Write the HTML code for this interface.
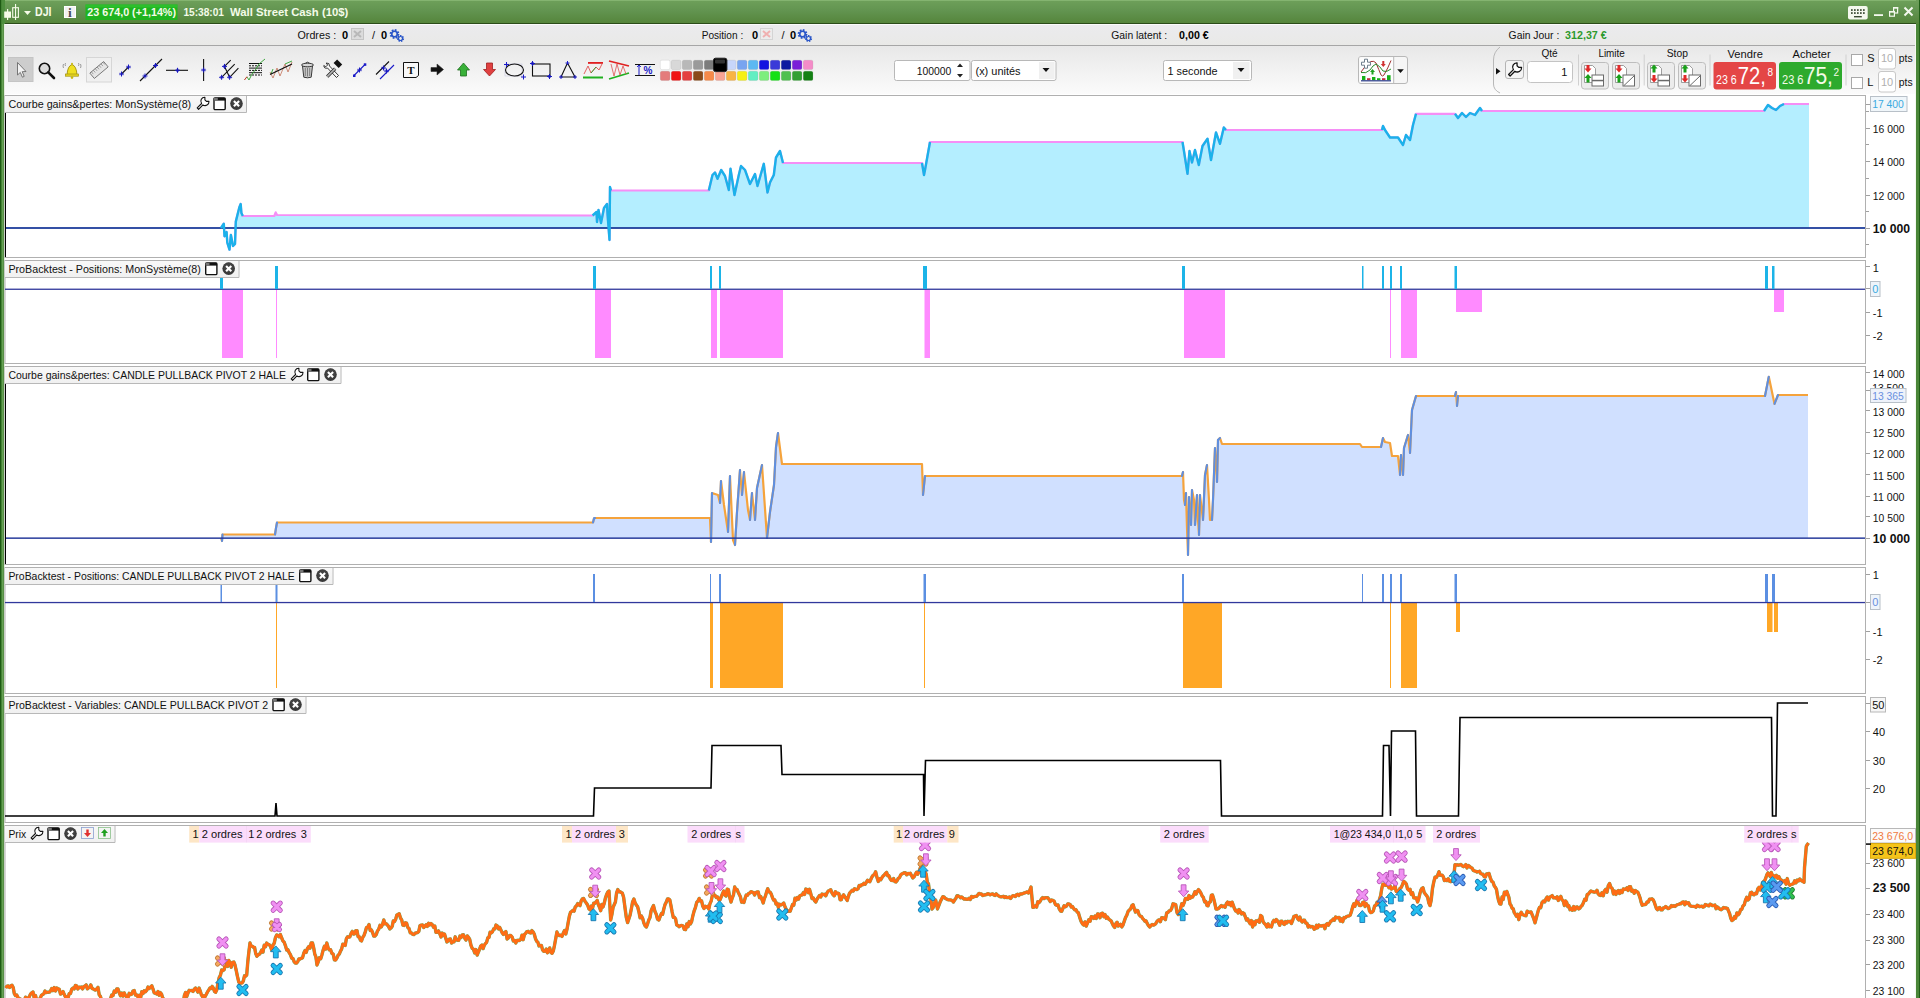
<!DOCTYPE html><html><head><meta charset="utf-8"><style>
html,body{margin:0;padding:0;width:1920px;height:998px;overflow:hidden;background:#fff;}
svg{position:absolute;left:0;top:0;display:block}
text{font-family:"Liberation Sans", sans-serif;}
</style></head><body>
<svg width="1920" height="998" viewBox="0 0 1920 998" shape-rendering="geometricPrecision">
<defs>
<linearGradient id="gTitle" x1="0" y1="0" x2="0" y2="1"><stop offset="0" stop-color="#6ea05a"/><stop offset="0.45" stop-color="#629450"/><stop offset="1" stop-color="#54843a"/></linearGradient>
<linearGradient id="gTool" x1="0" y1="0" x2="0" y2="1"><stop offset="0" stop-color="#e8e8e8"/><stop offset="1" stop-color="#fbfbfb"/></linearGradient>
<linearGradient id="gInfo" x1="0" y1="0" x2="0" y2="1"><stop offset="0" stop-color="#ebebee"/><stop offset="1" stop-color="#e9e9e7"/></linearGradient>
<linearGradient id="gHdr" x1="0" y1="0" x2="0" y2="1"><stop offset="0" stop-color="#f8f8f8"/><stop offset="1" stop-color="#f0f0f0"/></linearGradient>
</defs>

<rect x="0" y="0" width="1920" height="998" fill="#ffffff"/>
<rect x="0" y="0" width="1920" height="24" fill="url(#gTitle)"/>
<rect x="0" y="23" width="1916" height="1" fill="#2b4c1a"/>
<rect x="0" y="0" width="1916" height="1" fill="#84b470"/>
<rect x="0" y="0" width="5" height="998" fill="#4e8e3e"/>
<rect x="0" y="0" width="1.2" height="998" fill="#1e5a14"/>
<rect x="2.4" y="24" width="0.9" height="974" fill="#74ac64"/>
<rect x="3.3" y="24" width="0.8" height="974" fill="#5a8c48"/>
<rect x="4.1" y="24" width="0.9" height="974" fill="#f4f8f0"/>
<rect x="1916" y="24" width="4" height="974" fill="#4a8638"/>
<rect x="1919" y="0" width="1" height="998" fill="#1f5e16"/>
<rect x="1915" y="24" width="1" height="974" fill="#f4f8f0"/>
<rect x="5" y="24" width="1910" height="21" fill="url(#gInfo)"/>
<rect x="5" y="24" width="1910" height="1" fill="#fafafa"/>
<rect x="5" y="45" width="1910" height="1" fill="#a6a6a6"/>
<rect x="5" y="46" width="1910" height="48" fill="url(#gTool)"/>
<rect x="5" y="95" width="1860.5" height="162" fill="#ffffff" stroke="#b0b0b0" stroke-width="1" transform="translate(0,0.5)"/>
<rect x="5" y="260" width="1860.5" height="103" fill="#ffffff" stroke="#b0b0b0" stroke-width="1" transform="translate(0,0.5)"/>
<rect x="5" y="366" width="1860.5" height="198" fill="#ffffff" stroke="#b0b0b0" stroke-width="1" transform="translate(0,0.5)"/>
<rect x="5" y="567" width="1860.5" height="126" fill="#ffffff" stroke="#b0b0b0" stroke-width="1" transform="translate(0,0.5)"/>
<rect x="5" y="696" width="1860.5" height="126" fill="#ffffff" stroke="#b0b0b0" stroke-width="1" transform="translate(0,0.5)"/>
<rect x="5" y="825" width="1860.5" height="175" fill="#ffffff" stroke="#b0b0b0" stroke-width="1" transform="translate(0,0.5)"/>
<polygon points="221.0,228.0 221.0,228.0 223.8,223.7 224.5,228.0 226.6,228.0 227.3,228.0 229.5,228.0 230.9,228.0 233.0,228.0 235.0,228.0 235.8,221.6 239.3,207.5 240.7,204.0 241.4,213.0 242.8,216.0 274.3,216.0 275.7,212.4 277.1,215.0 592.6,215.5 596.5,212.0 597.0,222.0 598.5,210.0 601.0,223.0 604.0,208.0 607.0,204.0 607.5,214.0 609.5,228.0 610.0,187.0 611.0,190.5 708.8,190.5 712.5,175.0 715.0,172.5 717.5,178.8 721.2,170.0 725.0,176.0 728.8,190.0 730.5,168.8 734.5,195.0 738.8,175.0 741.0,166.0 745.0,170.0 750.0,184.0 755.0,174.0 757.5,186.0 763.8,163.8 767.5,192.5 770.0,182.5 773.8,175.0 776.0,157.5 780.0,151.0 783.0,163.0 922.0,163.0 924.0,175.0 925.0,170.0 930.0,142.0 1182.5,142.0 1183.8,150.0 1187.5,173.8 1189.5,151.0 1192.0,162.5 1195.0,150.0 1198.8,165.0 1202.5,146.0 1207.5,138.8 1211.0,160.0 1216.0,132.5 1220.0,143.8 1223.8,127.5 1226.0,130.0 1382.0,130.0 1383.0,126.0 1385.0,130.0 1390.0,137.5 1398.0,137.5 1403.0,145.0 1406.0,135.0 1410.0,140.0 1413.0,125.0 1416.0,113.8 1455.0,113.8 1458.0,118.0 1462.0,113.0 1466.0,117.0 1470.0,113.0 1475.0,115.0 1480.0,108.0 1482.0,111.0 1764.0,111.0 1768.0,105.0 1772.0,108.0 1776.0,110.0 1780.0,106.0 1784.0,104.0 1809.0,104.0 1809.0,228.0" fill="#b4eeff"/>
<polyline points="221.0,228.0 223.8,223.7 224.5,236.3 226.6,232.0 227.3,242.6 229.5,249.6 230.9,234.9 233.0,246.0 235.0,244.0 235.8,221.6 239.3,207.5 240.7,204.0 241.4,213.0 242.8,216.0 274.3,216.0 275.7,212.4 277.1,215.0 592.6,215.5 596.5,212.0 597.0,222.0 598.5,210.0 601.0,223.0 604.0,208.0 607.0,204.0 607.5,214.0 609.5,240.0 610.0,187.0 611.0,190.5 708.8,190.5 712.5,175.0 715.0,172.5 717.5,178.8 721.2,170.0 725.0,176.0 728.8,190.0 730.5,168.8 734.5,195.0 738.8,175.0 741.0,166.0 745.0,170.0 750.0,184.0 755.0,174.0 757.5,186.0 763.8,163.8 767.5,192.5 770.0,182.5 773.8,175.0 776.0,157.5 780.0,151.0 783.0,163.0 922.0,163.0 924.0,175.0 925.0,170.0 930.0,142.0 1182.5,142.0 1183.8,150.0 1187.5,173.8 1189.5,151.0 1192.0,162.5 1195.0,150.0 1198.8,165.0 1202.5,146.0 1207.5,138.8 1211.0,160.0 1216.0,132.5 1220.0,143.8 1223.8,127.5 1226.0,130.0 1382.0,130.0 1383.0,126.0 1385.0,130.0 1390.0,137.5 1398.0,137.5 1403.0,145.0 1406.0,135.0 1410.0,140.0 1413.0,125.0 1416.0,113.8 1455.0,113.8 1458.0,118.0 1462.0,113.0 1466.0,117.0 1470.0,113.0 1475.0,115.0 1480.0,108.0 1482.0,111.0 1764.0,111.0 1768.0,105.0 1772.0,108.0 1776.0,110.0 1780.0,106.0 1784.0,104.0 1809.0,104.0" fill="none" stroke="#f58ef5" stroke-width="2.2" stroke-linejoin="round"/>
<rect x="5" y="227.1" width="1860" height="1.8" fill="#1f3d9c"/>
<polyline points="221.0,228.0 223.8,223.7 224.5,236.3 226.6,232.0 227.3,242.6 229.5,249.6 230.9,234.9 233.0,246.0 235.0,244.0 235.8,221.6 239.3,207.5 240.7,204.0 241.4,213.0 242.8,216.0" fill="none" stroke="#1ab2ea" stroke-width="2.4" stroke-linejoin="round"/>
<polyline points="592.6,215.5 596.5,212.0 597.0,222.0 598.5,210.0 601.0,223.0 604.0,208.0 607.0,204.0 607.5,214.0 609.5,240.0 610.0,187.0 611.0,190.5" fill="none" stroke="#1ab2ea" stroke-width="2.4" stroke-linejoin="round"/>
<polyline points="708.8,190.5 712.5,175.0 715.0,172.5 717.5,178.8 721.2,170.0 725.0,176.0 728.8,190.0 730.5,168.8 734.5,195.0 738.8,175.0 741.0,166.0 745.0,170.0 750.0,184.0 755.0,174.0 757.5,186.0 763.8,163.8 767.5,192.5 770.0,182.5 773.8,175.0 776.0,157.5 780.0,151.0 783.0,163.0" fill="none" stroke="#1ab2ea" stroke-width="2.4" stroke-linejoin="round"/>
<polyline points="922.0,163.0 924.0,175.0 925.0,170.0 930.0,142.0" fill="none" stroke="#1ab2ea" stroke-width="2.4" stroke-linejoin="round"/>
<polyline points="1182.5,142.0 1183.8,150.0 1187.5,173.8 1189.5,151.0 1192.0,162.5 1195.0,150.0 1198.8,165.0 1202.5,146.0 1207.5,138.8 1211.0,160.0 1216.0,132.5 1220.0,143.8 1223.8,127.5 1226.0,130.0" fill="none" stroke="#1ab2ea" stroke-width="2.4" stroke-linejoin="round"/>
<polyline points="1382.0,130.0 1383.0,126.0 1385.0,130.0 1390.0,137.5 1398.0,137.5 1403.0,145.0 1406.0,135.0 1410.0,140.0 1413.0,125.0 1416.0,113.8" fill="none" stroke="#1ab2ea" stroke-width="2.4" stroke-linejoin="round"/>
<polyline points="1455.0,113.8 1458.0,118.0 1462.0,113.0 1466.0,117.0 1470.0,113.0 1475.0,115.0 1480.0,108.0 1482.0,111.0" fill="none" stroke="#1ab2ea" stroke-width="2.4" stroke-linejoin="round"/>
<polyline points="1764.0,111.0 1768.0,105.0 1772.0,108.0 1776.0,110.0 1780.0,106.0 1784.0,104.0" fill="none" stroke="#1ab2ea" stroke-width="2.4" stroke-linejoin="round"/>
<rect x="5" y="113" width="1" height="144" fill="#000"/>
<rect x="222" y="290" width="21" height="68" fill="#ff8bff"/>
<rect x="276" y="290" width="1" height="68" fill="#ff8bff"/>
<rect x="595" y="290" width="16" height="68" fill="#ff8bff"/>
<rect x="711" y="290" width="6" height="68" fill="#ff8bff"/>
<rect x="720" y="290" width="63" height="68" fill="#ff8bff"/>
<rect x="924.5" y="290" width="5.5" height="68" fill="#ff8bff"/>
<rect x="1184" y="290" width="41" height="68" fill="#ff8bff"/>
<rect x="1390" y="290" width="1" height="68" fill="#ff8bff"/>
<rect x="1401" y="290" width="16" height="68" fill="#ff8bff"/>
<rect x="1456" y="290" width="26" height="22" fill="#ff8bff"/>
<rect x="1774" y="290" width="10" height="22" fill="#ff8bff"/>
<rect x="5" y="288.6" width="1860" height="1.3" fill="#30389c"/>
<rect x="220" y="277" width="3" height="12" fill="#1cb4e8"/>
<rect x="275" y="266" width="3" height="23" fill="#1cb4e8"/>
<rect x="593" y="266" width="3" height="23" fill="#1cb4e8"/>
<rect x="710" y="266" width="2" height="23" fill="#1cb4e8"/>
<rect x="719" y="266" width="2" height="23" fill="#1cb4e8"/>
<rect x="923" y="266" width="4" height="23" fill="#1cb4e8"/>
<rect x="1182" y="266" width="3" height="23" fill="#1cb4e8"/>
<rect x="1362" y="266" width="1.5" height="23" fill="#1cb4e8"/>
<rect x="1382" y="266" width="2" height="23" fill="#1cb4e8"/>
<rect x="1390" y="266" width="2" height="23" fill="#1cb4e8"/>
<rect x="1400" y="266" width="2" height="23" fill="#1cb4e8"/>
<rect x="1454.5" y="266" width="2.5" height="23" fill="#1cb4e8"/>
<rect x="1765" y="266" width="3" height="23" fill="#1cb4e8"/>
<rect x="1772" y="266" width="2.5" height="23" fill="#1cb4e8"/>
<polygon points="221.0,538.0 221.0,538.0 222.0,538.0 222.5,534.5 275.0,534.5 276.0,528.0 277.0,522.5 593.0,522.5 594.0,518.5 595.0,518.0 710.0,518.0 711.0,538.0 712.0,493.0 718.0,495.0 720.0,503.0 721.0,481.0 724.0,505.0 728.0,532.0 730.0,476.0 733.0,538.0 735.0,538.0 737.0,512.0 740.0,470.0 742.0,495.0 744.0,472.0 748.0,510.0 750.0,520.0 752.0,493.0 755.0,520.0 757.0,488.0 762.0,465.0 767.0,538.0 770.0,512.0 774.0,485.0 776.0,447.0 778.0,433.0 782.0,464.0 922.0,464.0 923.0,495.0 925.0,476.0 1182.0,476.0 1183.0,472.0 1184.0,500.0 1185.0,505.0 1186.0,493.0 1187.0,528.0 1188.0,538.0 1189.0,497.0 1191.0,525.0 1192.0,490.0 1194.0,500.0 1195.0,525.0 1197.0,495.0 1198.0,520.0 1199.0,535.0 1200.0,495.0 1203.0,520.0 1205.0,475.0 1207.0,465.0 1209.0,500.0 1210.0,520.0 1212.0,520.0 1213.0,500.0 1215.0,448.0 1217.0,482.0 1218.0,440.0 1220.0,438.0 1222.0,444.0 1360.0,444.0 1362.0,447.0 1381.0,447.0 1383.0,438.0 1385.0,442.0 1390.0,443.0 1392.0,456.0 1398.0,456.0 1400.0,475.0 1401.0,455.0 1403.0,475.0 1404.0,448.0 1408.0,435.0 1410.0,453.0 1412.0,410.0 1416.0,396.0 1455.0,396.0 1456.0,392.0 1457.0,406.0 1458.0,396.0 1765.0,396.0 1768.8,376.8 1774.5,403.8 1778.0,395.0 1808.0,395.0 1808.0,538.0" fill="#d0e0ff"/>
<polyline points="221.0,538.0 222.0,541.0 222.5,534.5 275.0,534.5 276.0,528.0 277.0,522.5 593.0,522.5 594.0,518.5 595.0,518.0 710.0,518.0 711.0,542.0 712.0,493.0 718.0,495.0 720.0,503.0 721.0,481.0 724.0,505.0 728.0,532.0 730.0,476.0 733.0,540.0 735.0,545.0 737.0,512.0 740.0,470.0 742.0,495.0 744.0,472.0 748.0,510.0 750.0,520.0 752.0,493.0 755.0,520.0 757.0,488.0 762.0,465.0 767.0,538.0 770.0,512.0 774.0,485.0 776.0,447.0 778.0,433.0 782.0,464.0 922.0,464.0 923.0,495.0 925.0,476.0 1182.0,476.0 1183.0,472.0 1184.0,500.0 1185.0,505.0 1186.0,493.0 1187.0,528.0 1188.0,555.0 1189.0,497.0 1191.0,525.0 1192.0,490.0 1194.0,500.0 1195.0,525.0 1197.0,495.0 1198.0,520.0 1199.0,535.0 1200.0,495.0 1203.0,520.0 1205.0,475.0 1207.0,465.0 1209.0,500.0 1210.0,520.0 1212.0,520.0 1213.0,500.0 1215.0,448.0 1217.0,482.0 1218.0,440.0 1220.0,438.0 1222.0,444.0 1360.0,444.0 1362.0,447.0 1381.0,447.0 1383.0,438.0 1385.0,442.0 1390.0,443.0 1392.0,456.0 1398.0,456.0 1400.0,475.0 1401.0,455.0 1403.0,475.0 1404.0,448.0 1408.0,435.0 1410.0,453.0 1412.0,410.0 1416.0,396.0 1455.0,396.0 1456.0,392.0 1457.0,406.0 1458.0,396.0 1765.0,396.0 1768.8,376.8 1774.5,403.8 1778.0,395.0 1808.0,395.0" fill="none" stroke="#f5a33c" stroke-width="2.2" stroke-linejoin="round"/>
<line x1="222.0" y1="541.0" x2="222.5" y2="534.5" stroke="#5f8fe0" stroke-width="2.1" stroke-linecap="round"/><line x1="275.0" y1="534.5" x2="276.0" y2="528.0" stroke="#5f8fe0" stroke-width="2.1" stroke-linecap="round"/><line x1="276.0" y1="528.0" x2="277.0" y2="522.5" stroke="#5f8fe0" stroke-width="2.1" stroke-linecap="round"/><line x1="593.0" y1="522.5" x2="594.0" y2="518.5" stroke="#5f8fe0" stroke-width="2.1" stroke-linecap="round"/><line x1="594.0" y1="518.5" x2="595.0" y2="518.0" stroke="#5f8fe0" stroke-width="2.1" stroke-linecap="round"/><line x1="711.0" y1="542.0" x2="712.0" y2="493.0" stroke="#5f8fe0" stroke-width="2.1" stroke-linecap="round"/><line x1="720.0" y1="503.0" x2="721.0" y2="481.0" stroke="#5f8fe0" stroke-width="2.1" stroke-linecap="round"/><line x1="728.0" y1="532.0" x2="730.0" y2="476.0" stroke="#5f8fe0" stroke-width="2.1" stroke-linecap="round"/><line x1="735.0" y1="545.0" x2="737.0" y2="512.0" stroke="#5f8fe0" stroke-width="2.1" stroke-linecap="round"/><line x1="737.0" y1="512.0" x2="740.0" y2="470.0" stroke="#5f8fe0" stroke-width="2.1" stroke-linecap="round"/><line x1="742.0" y1="495.0" x2="744.0" y2="472.0" stroke="#5f8fe0" stroke-width="2.1" stroke-linecap="round"/><line x1="750.0" y1="520.0" x2="752.0" y2="493.0" stroke="#5f8fe0" stroke-width="2.1" stroke-linecap="round"/><line x1="755.0" y1="520.0" x2="757.0" y2="488.0" stroke="#5f8fe0" stroke-width="2.1" stroke-linecap="round"/><line x1="757.0" y1="488.0" x2="762.0" y2="465.0" stroke="#5f8fe0" stroke-width="2.1" stroke-linecap="round"/><line x1="767.0" y1="538.0" x2="770.0" y2="512.0" stroke="#5f8fe0" stroke-width="2.1" stroke-linecap="round"/><line x1="770.0" y1="512.0" x2="774.0" y2="485.0" stroke="#5f8fe0" stroke-width="2.1" stroke-linecap="round"/><line x1="774.0" y1="485.0" x2="776.0" y2="447.0" stroke="#5f8fe0" stroke-width="2.1" stroke-linecap="round"/><line x1="776.0" y1="447.0" x2="778.0" y2="433.0" stroke="#5f8fe0" stroke-width="2.1" stroke-linecap="round"/><line x1="923.0" y1="495.0" x2="925.0" y2="476.0" stroke="#5f8fe0" stroke-width="2.1" stroke-linecap="round"/><line x1="1182.0" y1="476.0" x2="1183.0" y2="472.0" stroke="#5f8fe0" stroke-width="2.1" stroke-linecap="round"/><line x1="1185.0" y1="505.0" x2="1186.0" y2="493.0" stroke="#5f8fe0" stroke-width="2.1" stroke-linecap="round"/><line x1="1188.0" y1="555.0" x2="1189.0" y2="497.0" stroke="#5f8fe0" stroke-width="2.1" stroke-linecap="round"/><line x1="1191.0" y1="525.0" x2="1192.0" y2="490.0" stroke="#5f8fe0" stroke-width="2.1" stroke-linecap="round"/><line x1="1195.0" y1="525.0" x2="1197.0" y2="495.0" stroke="#5f8fe0" stroke-width="2.1" stroke-linecap="round"/><line x1="1199.0" y1="535.0" x2="1200.0" y2="495.0" stroke="#5f8fe0" stroke-width="2.1" stroke-linecap="round"/><line x1="1203.0" y1="520.0" x2="1205.0" y2="475.0" stroke="#5f8fe0" stroke-width="2.1" stroke-linecap="round"/><line x1="1205.0" y1="475.0" x2="1207.0" y2="465.0" stroke="#5f8fe0" stroke-width="2.1" stroke-linecap="round"/><line x1="1212.0" y1="520.0" x2="1213.0" y2="500.0" stroke="#5f8fe0" stroke-width="2.1" stroke-linecap="round"/><line x1="1213.0" y1="500.0" x2="1215.0" y2="448.0" stroke="#5f8fe0" stroke-width="2.1" stroke-linecap="round"/><line x1="1217.0" y1="482.0" x2="1218.0" y2="440.0" stroke="#5f8fe0" stroke-width="2.1" stroke-linecap="round"/><line x1="1218.0" y1="440.0" x2="1220.0" y2="438.0" stroke="#5f8fe0" stroke-width="2.1" stroke-linecap="round"/><line x1="1381.0" y1="447.0" x2="1383.0" y2="438.0" stroke="#5f8fe0" stroke-width="2.1" stroke-linecap="round"/><line x1="1400.0" y1="475.0" x2="1401.0" y2="455.0" stroke="#5f8fe0" stroke-width="2.1" stroke-linecap="round"/><line x1="1403.0" y1="475.0" x2="1404.0" y2="448.0" stroke="#5f8fe0" stroke-width="2.1" stroke-linecap="round"/><line x1="1404.0" y1="448.0" x2="1408.0" y2="435.0" stroke="#5f8fe0" stroke-width="2.1" stroke-linecap="round"/><line x1="1410.0" y1="453.0" x2="1412.0" y2="410.0" stroke="#5f8fe0" stroke-width="2.1" stroke-linecap="round"/><line x1="1412.0" y1="410.0" x2="1416.0" y2="396.0" stroke="#5f8fe0" stroke-width="2.1" stroke-linecap="round"/><line x1="1455.0" y1="396.0" x2="1456.0" y2="392.0" stroke="#5f8fe0" stroke-width="2.1" stroke-linecap="round"/><line x1="1457.0" y1="406.0" x2="1458.0" y2="396.0" stroke="#5f8fe0" stroke-width="2.1" stroke-linecap="round"/><line x1="1765.0" y1="396.0" x2="1768.8" y2="376.8" stroke="#5f8fe0" stroke-width="2.1" stroke-linecap="round"/><line x1="1774.5" y1="403.8" x2="1778.0" y2="395.0" stroke="#5f8fe0" stroke-width="2.1" stroke-linecap="round"/>
<rect x="5" y="537.4" width="1860" height="1.5" fill="#283c9c"/>
<rect x="5" y="384" width="1" height="180" fill="#000"/>
<rect x="276" y="603" width="1" height="85" fill="#ffa726"/>
<rect x="710" y="603" width="3" height="85" fill="#ffa726"/>
<rect x="720" y="603" width="63" height="85" fill="#ffa726"/>
<rect x="924" y="603" width="1" height="85" fill="#ffa726"/>
<rect x="1183" y="603" width="39" height="85" fill="#ffa726"/>
<rect x="1390" y="603" width="1" height="85" fill="#ffa726"/>
<rect x="1401" y="603" width="16" height="85" fill="#ffa726"/>
<rect x="1456" y="603" width="4" height="29" fill="#ffa726"/>
<rect x="1767" y="603" width="5.5" height="29" fill="#ffa726"/>
<rect x="1774" y="603" width="4" height="29" fill="#ffa726"/>
<rect x="5" y="601.9" width="1860" height="1.3" fill="#30389c"/>
<rect x="220.5" y="574" width="1.5" height="28" fill="#5b8fe2"/>
<rect x="275.5" y="574" width="2.0" height="28" fill="#5b8fe2"/>
<rect x="593" y="574" width="2" height="28" fill="#5b8fe2"/>
<rect x="710" y="574" width="1" height="28" fill="#5b8fe2"/>
<rect x="719" y="574" width="2" height="28" fill="#5b8fe2"/>
<rect x="923.5" y="574" width="2.5" height="28" fill="#5b8fe2"/>
<rect x="1182" y="574" width="2" height="28" fill="#5b8fe2"/>
<rect x="1362" y="574" width="1" height="28" fill="#5b8fe2"/>
<rect x="1382" y="574" width="2" height="28" fill="#5b8fe2"/>
<rect x="1390" y="574" width="2" height="28" fill="#5b8fe2"/>
<rect x="1400" y="574" width="2" height="28" fill="#5b8fe2"/>
<rect x="1454.5" y="574" width="2.5" height="28" fill="#5b8fe2"/>
<rect x="1765" y="574" width="3" height="28" fill="#5b8fe2"/>
<rect x="1772" y="574" width="3" height="28" fill="#5b8fe2"/>
<polyline points="5.0,816.0 275.0,816.0 276.0,803.0 277.0,816.0 593.5,816.0 594.5,788.0 711.0,788.0 712.0,745.5 781.0,745.5 782.0,774.5 923.5,774.5 924.0,816.0 925.5,760.5 1220.5,760.5 1221.5,816.0 1382.5,816.0 1383.5,745.5 1389.0,745.5 1390.5,816.0 1391.5,731.0 1415.5,731.0 1416.5,816.0 1458.5,816.0 1460.0,717.5 1771.5,717.5 1772.5,816.0 1776.0,816.0 1777.5,703.0 1808.0,703.0" fill="none" stroke="#000" stroke-width="1.6" stroke-linejoin="miter"/>
<polyline points="5.8,988.0 7.0,986.1 8.3,985.9 9.6,987.5 10.8,986.0 12.0,985.2 13.2,987.6 14.3,993.6 15.5,995.6 16.7,995.0 18.0,997.6 19.2,998.5 20.5,999.0 21.7,1001.6 23.0,1001.0 24.2,1001.3 25.5,997.2 26.8,999.2 28.0,998.1 29.2,996.9 30.5,994.1 31.8,992.8 33.0,992.0 34.2,997.9 35.5,995.5 36.8,1001.0 38.0,1001.0 39.2,1000.0 40.3,997.9 41.5,995.2 42.7,994.6 43.8,993.7 45.0,991.0 46.1,992.5 47.2,992.3 48.4,992.2 49.5,992.1 50.6,990.8 51.7,988.5 53.0,990.6 54.2,987.5 55.5,991.0 56.7,988.0 58.0,988.8 59.2,989.1 60.5,994.1 61.7,993.1 63.0,991.5 64.2,994.3 65.5,997.1 66.8,997.0 68.0,998.0 69.2,993.6 70.5,993.5 71.8,989.0 73.0,988.0 74.2,988.9 75.4,985.4 76.6,985.8 77.8,989.0 79.0,987.2 80.2,987.6 81.4,987.1 82.6,988.9 83.8,986.5 85.0,986.0 86.2,984.9 87.3,988.8 88.5,987.9 89.7,987.0 90.8,984.9 92.0,988.4 93.2,988.9 94.4,989.6 95.5,990.1 96.7,989.0 98.0,987.4 99.2,994.8 100.5,996.6 101.7,1001.0 103.0,1001.5 104.2,1000.4 105.5,1000.1 106.7,999.7 108.0,1001.0 109.2,1001.9 110.5,998.6 111.7,995.1 113.0,995.6 114.2,991.1 115.5,992.3 116.7,989.0 118.0,989.0 119.2,992.6 120.5,995.8 121.7,993.1 123.0,996.1 124.2,992.9 125.5,995.6 126.7,997.0 128.0,997.5 129.2,993.3 130.5,994.7 131.7,994.2 133.0,991.0 134.2,990.5 135.5,995.1 136.8,994.9 138.0,997.0 139.2,995.3 140.5,998.5 141.8,991.6 143.0,993.6 144.2,990.8 145.5,991.8 146.8,990.2 148.0,987.0 149.2,988.4 150.5,987.2 151.8,985.8 153.0,989.0 154.2,992.8 155.5,993.3 156.8,994.0 158.0,991.5 159.2,995.2 160.3,992.6 161.5,994.0 162.7,998.1 163.8,999.0 165.0,1001.0 166.2,1001.9 167.3,1000.5 168.5,1001.6 169.7,1001.4 170.8,1002.6 172.0,1003.0 173.2,1001.2 174.5,1004.8 175.8,1006.6 177.0,1004.6 178.2,1001.0 179.5,1001.2 180.8,1002.1 182.0,1003.0 183.2,1003.7 184.4,995.3 185.6,992.4 186.8,996.4 188.0,993.0 189.2,990.3 190.5,990.6 191.7,990.5 193.0,991.5 194.2,989.2 195.5,988.0 196.7,990.0 197.9,992.1 199.1,988.1 200.3,991.2 201.4,994.9 202.6,996.7 203.8,995.8 205.0,996.7 206.2,994.5 207.5,991.9 208.8,989.9 210.0,988.0 211.1,988.5 212.2,986.4 213.3,988.0 214.5,991.4 215.6,992.3 216.7,990.0 217.9,983.7 219.2,977.6 220.4,975.3 221.7,970.0 222.9,970.6 224.1,969.7 225.3,965.3 226.4,960.8 227.6,966.4 228.8,960.4 230.0,963.0 231.2,967.2 232.5,962.4 233.8,962.0 235.0,965.0 236.2,970.4 237.5,976.7 238.8,982.1 240.0,983.0 241.1,983.1 242.2,982.8 243.3,981.0 244.5,975.8 245.6,976.2 246.7,975.0 247.8,961.8 248.9,951.7 250.0,943.0 251.1,946.1 252.3,946.1 253.4,947.2 254.6,947.4 255.7,953.5 256.9,956.2 258.0,955.0 259.2,954.3 260.5,952.8 261.7,950.1 263.0,952.1 264.2,945.2 265.5,946.7 266.7,943.0 267.9,944.4 269.2,944.7 270.4,946.2 271.7,950.0 272.9,945.3 274.2,943.3 275.4,937.8 276.7,935.0 277.9,935.3 279.2,936.8 280.4,934.6 281.7,938.0 282.9,940.9 284.2,942.2 285.4,945.6 286.7,950.0 287.9,949.7 289.2,952.7 290.4,954.6 291.7,958.2 292.9,958.4 294.2,961.8 295.4,963.1 296.7,963.0 297.8,961.5 298.9,958.9 300.0,959.0 301.2,958.3 302.5,957.9 303.8,953.1 305.0,950.6 306.2,952.4 307.5,948.4 308.8,946.6 310.0,948.1 311.2,942.9 312.5,943.0 313.6,947.4 314.8,954.2 315.9,956.9 317.0,965.0 318.2,961.9 319.4,957.8 320.7,958.8 321.9,954.9 323.1,950.3 324.4,946.2 325.6,949.1 326.8,943.0 328.1,947.8 329.3,949.9 330.6,949.7 331.9,953.4 333.2,954.0 334.4,959.8 335.7,960.0 336.9,958.0 338.1,955.3 339.3,954.1 340.5,951.1 341.6,949.1 342.8,944.2 344.0,944.5 345.2,945.5 346.4,938.6 347.6,936.8 348.8,937.1 349.9,936.8 351.1,933.4 352.3,931.4 353.5,934.0 354.6,933.8 355.8,930.6 357.0,930.6 358.1,936.8 359.2,936.7 360.4,940.1 361.5,941.0 362.8,937.3 364.0,935.4 365.3,931.8 366.5,927.5 367.8,927.0 369.0,924.6 370.2,930.5 371.4,929.9 372.5,932.2 373.7,936.0 374.9,936.0 376.2,934.6 377.4,931.1 378.7,929.2 380.0,925.3 381.3,926.9 382.5,924.5 383.8,920.0 385.0,923.8 386.2,923.6 387.4,924.9 388.6,926.6 389.8,928.9 391.0,928.0 392.2,926.3 393.3,920.9 394.5,921.5 395.7,919.2 396.8,915.1 398.0,914.5 399.2,913.7 400.5,918.0 401.7,919.9 402.9,925.1 404.1,925.5 405.4,922.8 406.6,923.2 407.8,927.4 409.0,928.5 410.3,932.9 411.5,933.0 412.7,934.3 413.9,934.6 415.2,933.2 416.4,932.8 417.6,932.5 418.8,931.4 420.0,925.5 421.2,925.1 422.5,925.0 423.7,927.5 424.9,926.2 426.1,924.7 427.3,926.4 428.6,923.2 429.8,924.9 431.0,923.5 432.2,924.5 433.5,927.2 434.8,926.0 436.0,932.4 437.2,932.2 438.5,930.9 439.8,933.7 441.0,937.0 442.2,933.1 443.4,935.4 444.5,934.0 445.7,938.1 446.9,941.9 448.1,940.9 449.2,939.1 450.4,939.0 451.6,943.0 452.8,941.9 454.0,941.8 455.2,936.8 456.4,939.8 457.5,940.2 458.7,940.4 459.9,936.1 461.1,937.4 462.3,935.0 463.5,934.8 464.8,938.2 466.0,940.0 467.3,935.9 468.5,937.3 469.7,939.4 471.0,945.4 472.2,948.3 473.4,949.1 474.7,952.9 475.9,949.5 477.2,955.1 478.4,952.0 479.6,949.1 480.7,946.0 481.9,945.1 483.1,948.6 484.3,945.2 485.4,943.6 486.6,942.3 487.8,937.9 489.0,937.4 490.1,932.2 491.3,932.9 492.5,931.7 493.7,928.8 494.8,928.9 496.0,925.0 497.2,925.9 498.5,928.9 499.7,927.4 500.9,930.0 502.2,932.8 503.4,934.4 504.7,932.6 505.9,931.6 507.1,939.0 508.4,937.9 509.6,935.5 510.8,935.5 512.1,937.0 513.3,940.9 514.6,940.5 515.8,943.0 517.0,940.5 518.3,940.3 519.5,940.5 520.8,939.5 522.0,935.2 523.2,939.7 524.5,934.4 525.7,933.3 526.9,931.6 528.2,931.3 529.4,932.6 530.7,933.0 531.9,930.6 533.1,931.9 534.3,934.2 535.5,938.7 536.7,941.3 537.8,942.1 539.0,945.9 540.2,945.5 541.4,945.5 542.6,950.0 543.8,951.4 545.0,951.3 546.2,949.1 547.4,952.8 548.5,950.5 549.7,947.9 550.9,952.4 552.1,953.3 553.3,951.0 554.5,945.3 555.7,938.7 556.9,932.0 558.2,934.7 559.4,935.6 560.7,935.1 562.0,936.4 563.3,933.1 564.5,930.6 565.8,934.0 567.0,929.2 568.2,922.4 569.4,916.0 570.6,912.1 571.8,911.3 573.0,910.3 574.1,911.2 575.3,906.8 576.5,905.9 577.7,903.6 578.9,904.9 580.0,905.6 581.2,900.9 582.4,898.8 583.6,898.5 585.0,901.3 586.3,903.0 587.6,905.0 589.0,909.0 590.2,909.9 591.3,906.1 592.5,908.3 593.7,903.1 594.8,903.2 596.0,902.0 597.2,900.4 598.3,904.5 599.5,907.3 600.7,910.7 601.8,904.4 603.0,907.0 604.2,903.4 605.4,898.1 606.6,894.6 607.8,892.1 609.0,891.0 610.7,920.0 611.9,914.5 613.1,907.3 614.2,904.8 615.4,902.0 616.6,892.8 617.8,889.6 618.9,891.8 620.0,891.7 621.2,892.5 622.3,893.0 623.6,897.2 625.0,907.8 626.3,917.4 627.6,922.6 628.9,918.8 630.1,915.1 631.4,908.5 632.6,901.9 633.9,899.0 635.1,902.8 636.4,905.1 637.6,906.7 638.9,911.7 640.1,917.8 641.4,916.0 642.6,918.2 643.9,923.1 645.1,925.7 646.4,927.0 647.6,923.8 648.8,919.9 650.0,917.4 651.1,910.9 652.3,908.0 653.5,905.6 654.9,911.3 656.2,914.1 657.5,919.0 658.9,920.0 660.1,916.7 661.4,913.6 662.6,914.3 663.8,909.0 665.0,904.6 666.2,902.3 667.5,898.9 668.7,899.0 669.8,899.8 671.0,905.8 672.1,911.8 673.3,917.4 674.4,917.3 675.6,918.9 676.7,925.0 678.0,925.6 679.2,926.8 680.5,925.7 681.8,925.4 683.1,926.1 684.3,929.4 685.6,929.7 686.8,923.9 688.0,926.8 689.2,921.6 690.4,923.9 691.6,921.6 692.8,916.0 694.1,911.1 695.4,907.6 696.7,902.4 698.0,901.0 699.2,898.4 700.4,901.1 701.6,901.0 702.8,906.3 704.0,908.5 705.2,906.3 706.4,907.1 707.6,906.3 708.8,909.0 710.0,903.5 711.2,901.0 712.4,895.0 713.7,895.0 714.9,895.1 716.2,897.4 717.5,896.9 718.8,899.8 720.0,899.9 721.3,896.7 722.5,893.7 723.7,891.0 724.8,894.9 726.0,896.0 727.2,889.2 728.4,889.6 729.7,897.4 731.0,902.0 732.2,898.0 733.5,894.8 734.7,887.0 735.8,889.4 737.0,889.4 738.1,892.0 739.3,894.5 740.4,896.7 741.6,902.2 742.7,902.0 743.9,902.5 745.1,898.3 746.2,895.1 747.4,895.4 748.6,893.5 749.8,893.0 751.0,891.7 752.2,892.1 753.4,892.5 754.6,895.0 755.8,892.5 757.0,892.0 758.2,891.9 759.5,897.7 760.7,896.5 762.0,899.7 763.2,903.0 764.3,898.7 765.5,895.9 766.6,891.9 767.7,888.7 768.9,891.9 770.1,892.1 771.3,894.2 772.5,897.6 773.6,900.1 774.8,899.9 776.0,904.0 777.2,903.3 778.4,907.4 779.7,904.2 781.0,904.9 782.4,904.2 783.7,903.0 785.0,906.8 786.4,909.7 787.7,911.4 789.0,911.0 790.2,911.2 791.4,907.7 792.6,904.4 793.8,905.1 795.0,898.2 796.2,900.0 797.4,897.4 798.6,899.1 799.8,895.7 801.0,895.2 802.2,894.9 803.4,892.6 804.6,894.4 805.8,889.1 807.0,889.6 808.3,892.7 809.5,889.3 810.8,893.8 812.0,898.5 813.3,898.0 814.5,900.6 815.8,902.0 817.0,899.3 818.3,897.2 819.5,895.5 820.8,896.9 822.0,894.1 823.3,894.6 824.5,894.3 825.8,895.8 827.0,892.9 828.3,891.0 829.5,890.4 830.7,889.7 831.8,892.6 833.0,894.5 834.2,895.8 835.4,891.7 836.6,893.6 837.7,893.1 838.9,893.5 840.1,899.8 841.3,899.7 842.5,896.2 843.6,894.8 844.8,896.7 846.0,898.5 847.2,900.5 848.4,896.3 849.6,893.1 850.9,891.8 852.1,890.3 853.3,891.0 854.5,888.7 855.7,889.3 856.8,889.6 858.0,888.9 859.2,885.4 860.4,886.0 861.6,884.7 862.8,884.8 863.9,883.2 865.1,884.3 866.3,882.4 867.5,880.2 868.6,881.3 869.8,881.7 871.0,879.0 872.1,876.6 873.3,875.1 874.5,874.3 875.6,871.7 877.0,877.5 878.3,881.5 879.5,878.7 880.7,879.8 881.8,877.9 883.0,876.1 884.2,875.1 885.4,873.5 886.6,872.4 887.8,875.9 888.9,875.7 890.1,878.6 891.3,880.4 892.5,880.6 893.6,878.6 894.8,881.6 896.0,882.0 897.2,880.5 898.3,878.2 899.5,877.7 900.7,874.9 901.8,873.9 903.0,873.5 904.2,872.7 905.4,872.8 906.7,874.8 907.9,873.4 909.1,873.9 910.3,873.2 911.6,875.7 912.8,877.9 914.0,877.0 915.2,874.5 916.5,872.3 917.7,874.2 918.9,872.0 920.2,868.1 921.4,866.0 922.6,870.4 923.8,870.8 925.0,871.7 926.2,874.2 927.3,882.1 928.5,884.0 929.7,893.6 930.8,898.8 932.0,909.0 933.2,907.4 934.5,903.1 935.7,900.0 937.5,909.0 938.8,905.6 940.1,902.1 941.5,899.2 942.8,896.7 944.0,897.0 945.2,898.3 946.4,898.9 947.6,899.7 948.7,899.9 949.9,899.9 951.1,900.1 952.3,900.7 953.5,902.0 954.7,899.9 955.8,898.5 957.0,895.8 958.2,895.8 959.4,896.6 960.6,897.8 961.8,897.0 963.0,898.1 964.2,899.1 965.4,898.9 966.6,899.4 967.8,899.4 969.0,898.2 970.3,899.5 971.5,896.4 972.8,897.4 974.0,896.7 975.3,896.4 976.5,896.4 977.8,894.9 979.0,893.4 980.3,894.0 981.5,894.0 982.8,895.6 984.0,895.0 985.3,894.8 986.5,894.5 987.8,893.6 989.0,894.0 990.2,894.8 991.4,894.1 992.6,893.9 993.8,894.9 995.0,895.4 996.2,893.9 997.4,895.0 998.6,895.9 999.8,896.6 1001.0,896.8 1002.2,896.8 1003.4,896.3 1004.6,897.5 1005.8,896.7 1007.0,897.6 1008.2,897.5 1009.4,896.9 1010.6,898.5 1011.8,896.7 1012.9,895.6 1014.1,895.9 1015.3,896.6 1016.5,894.8 1017.7,894.2 1018.9,895.5 1020.1,894.0 1021.3,894.0 1022.5,893.8 1023.6,893.2 1024.8,892.8 1026.0,892.4 1027.2,891.9 1028.4,893.0 1029.7,890.5 1031.0,887.0 1032.0,898.2 1032.9,907.4 1034.1,907.1 1035.4,905.8 1036.6,907.1 1037.8,901.7 1039.0,902.7 1040.2,901.2 1041.5,898.7 1042.7,897.6 1044.0,898.6 1045.2,897.7 1046.5,897.6 1047.8,897.8 1049.1,899.6 1050.3,901.5 1051.6,900.0 1052.9,900.4 1054.1,901.2 1055.4,904.5 1056.7,905.3 1058.0,904.9 1059.2,908.7 1060.5,911.0 1061.7,911.3 1062.9,908.4 1064.1,905.7 1065.3,906.8 1066.5,906.1 1067.7,904.0 1068.9,903.9 1070.1,904.5 1071.3,907.1 1072.5,906.5 1073.6,908.4 1074.8,909.8 1076.0,909.7 1077.2,912.1 1078.4,912.8 1079.7,917.4 1081.1,921.4 1082.4,923.7 1083.7,925.0 1085.0,921.9 1086.2,926.1 1087.5,922.9 1088.8,919.7 1090.1,921.3 1091.3,916.7 1092.6,917.0 1093.8,918.5 1095.1,915.9 1096.3,918.4 1097.6,913.9 1098.8,914.2 1100.0,917.7 1101.3,913.6 1102.5,913.2 1103.8,916.7 1105.0,914.5 1106.2,918.2 1107.4,917.0 1108.7,919.1 1109.9,920.0 1111.1,920.8 1112.3,923.5 1113.5,926.0 1114.7,927.5 1115.9,923.6 1117.1,922.2 1118.2,926.0 1119.4,925.5 1120.6,924.2 1121.8,926.9 1123.0,925.0 1124.3,921.1 1125.5,917.6 1126.8,915.2 1128.1,911.4 1129.4,910.0 1130.6,908.9 1131.9,905.6 1133.1,904.7 1134.3,908.7 1135.5,912.1 1136.6,910.3 1137.8,910.6 1139.0,914.5 1140.2,916.1 1141.4,916.4 1142.6,918.4 1143.8,919.6 1144.9,921.2 1146.1,921.0 1147.3,923.6 1148.5,925.6 1149.7,927.0 1150.9,925.7 1152.1,924.4 1153.3,925.1 1154.5,924.6 1155.6,923.9 1156.8,921.7 1158.0,920.4 1159.2,919.9 1160.4,921.7 1161.7,917.6 1162.9,917.8 1164.2,918.1 1165.4,919.6 1166.7,912.9 1168.0,912.4 1169.2,910.8 1170.5,910.5 1171.7,908.4 1173.0,903.8 1174.3,904.2 1175.7,904.6 1177.0,912.5 1178.3,914.5 1179.5,913.4 1180.7,908.0 1181.8,903.7 1183.0,905.5 1184.2,902.7 1185.4,898.5 1186.6,898.5 1187.8,899.3 1189.0,895.5 1190.2,898.3 1191.4,896.8 1192.6,897.0 1193.7,894.8 1194.9,891.7 1196.1,894.0 1197.3,891.4 1198.5,889.6 1199.7,891.0 1200.9,893.1 1202.1,895.9 1203.3,897.3 1204.6,901.9 1205.8,901.5 1207.0,905.6 1208.1,905.8 1209.2,902.4 1210.3,902.0 1211.4,895.1 1212.5,895.0 1213.7,898.9 1214.8,903.4 1216.0,909.0 1217.1,909.1 1218.2,908.7 1219.2,907.9 1220.3,906.6 1221.4,905.6 1222.6,906.7 1223.9,906.1 1225.1,907.3 1226.4,903.6 1227.6,902.0 1228.8,904.4 1229.9,902.5 1231.1,905.7 1232.2,902.2 1233.4,905.6 1234.5,908.8 1235.7,911.0 1236.9,910.2 1238.1,913.0 1239.2,909.6 1240.4,911.5 1241.6,913.9 1242.8,912.8 1244.0,913.5 1245.2,916.5 1246.5,920.1 1247.7,918.9 1248.9,921.7 1250.1,923.7 1251.4,920.5 1252.6,927.0 1253.7,922.0 1254.9,924.8 1256.0,920.9 1257.2,921.4 1258.3,920.3 1259.5,922.3 1260.6,915.4 1261.9,916.6 1263.1,921.7 1264.4,923.5 1265.6,924.6 1266.9,927.0 1268.1,923.9 1269.2,926.7 1270.4,926.1 1271.5,926.9 1272.7,922.1 1273.8,920.4 1275.0,921.7 1276.2,919.5 1277.3,920.6 1278.5,922.8 1279.7,925.3 1280.8,921.3 1282.0,921.2 1283.2,923.6 1284.3,924.5 1285.5,921.6 1286.7,923.0 1287.8,921.3 1289.0,921.7 1290.2,921.3 1291.4,923.5 1292.7,920.3 1293.9,916.3 1295.1,916.0 1296.3,915.4 1297.5,918.4 1298.7,919.9 1299.9,917.1 1301.1,920.8 1302.3,922.0 1303.4,920.1 1304.6,920.3 1305.8,923.1 1307.0,923.3 1308.2,927.1 1309.4,925.9 1310.6,927.0 1311.8,926.5 1313.0,926.8 1314.2,929.3 1315.4,928.6 1316.5,925.3 1317.7,927.8 1318.9,925.0 1320.1,925.9 1321.3,926.0 1322.5,925.7 1323.7,925.4 1324.9,928.7 1326.1,924.6 1327.3,923.5 1328.4,925.2 1329.6,923.3 1330.8,921.1 1332.0,920.7 1333.2,919.0 1334.4,920.2 1335.6,917.0 1336.8,917.6 1338.0,917.9 1339.2,917.4 1340.3,921.1 1341.5,918.9 1342.7,921.7 1344.0,917.5 1345.2,917.9 1346.5,916.5 1347.8,916.1 1349.1,915.9 1350.3,915.1 1351.6,911.0 1352.7,906.6 1353.8,903.8 1354.8,906.5 1355.9,903.2 1357.0,900.3 1358.2,902.6 1359.3,905.3 1360.5,905.6 1361.7,904.8 1362.8,902.3 1364.0,902.0 1365.1,906.5 1366.2,903.6 1367.3,905.4 1368.4,905.8 1369.5,911.0 1370.8,912.6 1372.0,912.2 1373.3,910.9 1374.6,906.0 1375.9,905.2 1377.1,902.2 1378.4,903.8 1379.5,899.2 1380.6,895.9 1381.7,889.0 1382.8,884.2 1384.0,884.1 1385.3,885.4 1386.5,884.9 1387.8,885.5 1389.0,887.8 1390.2,886.0 1391.4,889.1 1392.6,888.2 1393.8,888.1 1395.0,885.7 1396.2,891.4 1397.5,891.6 1398.7,891.1 1400.0,888.4 1401.2,887.5 1402.5,884.6 1403.7,881.4 1405.0,882.4 1406.3,884.0 1407.5,888.8 1408.8,890.2 1410.0,889.2 1411.3,894.4 1412.6,892.7 1413.8,897.9 1415.1,898.0 1416.3,897.9 1417.6,902.0 1418.7,898.7 1419.8,894.0 1420.8,890.4 1421.9,888.4 1423.0,887.8 1424.2,892.5 1425.3,894.0 1426.5,895.6 1427.7,897.3 1428.8,902.9 1430.0,905.6 1431.2,900.2 1432.5,888.4 1433.7,882.4 1435.0,877.2 1436.3,877.5 1437.7,875.2 1439.0,871.7 1440.1,875.2 1441.2,875.1 1442.2,875.1 1443.3,876.7 1444.4,880.6 1445.7,879.6 1446.9,880.6 1448.2,878.7 1449.5,881.2 1450.8,881.7 1452.0,880.3 1453.3,880.6 1455.0,864.6 1456.2,865.0 1457.4,864.8 1458.6,865.2 1459.8,864.8 1461.0,864.5 1462.2,865.9 1463.4,866.7 1464.6,865.8 1465.8,864.6 1467.0,867.9 1468.3,865.6 1469.5,866.2 1470.8,867.6 1472.0,868.0 1473.3,870.4 1474.5,870.9 1475.8,871.3 1477.0,872.0 1478.3,871.7 1479.5,871.2 1480.7,873.5 1481.8,874.1 1483.0,874.3 1484.2,876.6 1485.4,877.0 1486.6,873.9 1487.8,873.8 1489.0,873.5 1490.3,877.8 1491.7,881.3 1493.0,882.1 1494.3,886.0 1495.4,887.3 1496.5,889.5 1497.5,895.7 1498.6,900.6 1499.7,903.8 1500.9,904.1 1502.1,896.9 1503.2,899.4 1504.4,892.1 1505.6,894.6 1506.8,891.4 1507.8,894.2 1508.9,897.4 1510.0,904.0 1511.0,905.3 1512.1,908.2 1513.2,908.8 1514.2,912.5 1515.3,914.2 1516.4,916.3 1517.6,914.3 1518.8,919.7 1520.0,914.7 1521.2,912.3 1522.4,914.4 1523.6,915.0 1524.8,915.5 1526.0,915.7 1527.2,911.2 1528.4,912.0 1529.7,912.3 1531.0,911.9 1532.4,915.3 1533.7,918.5 1535.0,922.8 1536.1,918.7 1537.2,914.6 1538.3,910.3 1539.4,907.5 1540.7,907.7 1542.0,902.7 1543.4,901.0 1544.7,902.0 1546.0,898.8 1547.2,897.0 1548.5,900.1 1549.7,897.2 1551.0,896.4 1552.2,895.6 1553.5,897.9 1554.7,897.7 1555.9,898.1 1557.1,896.8 1558.3,900.5 1559.5,898.3 1560.8,896.4 1562.0,899.8 1563.2,900.9 1564.4,905.5 1565.6,901.0 1566.7,902.3 1567.8,906.7 1568.9,905.6 1570.0,909.7 1571.2,908.4 1572.4,910.3 1573.7,906.5 1574.9,909.9 1576.1,907.2 1577.3,907.0 1578.6,908.9 1579.8,908.3 1581.0,906.4 1582.2,905.4 1583.5,902.5 1584.7,899.3 1586.0,900.3 1587.2,894.6 1588.5,893.9 1589.7,892.2 1590.9,891.0 1592.1,891.6 1593.3,891.8 1594.5,892.2 1595.8,891.9 1597.0,890.3 1598.2,893.9 1599.4,895.1 1600.6,895.5 1601.9,892.8 1603.2,895.8 1604.4,891.0 1605.7,889.4 1607.0,892.2 1608.3,885.6 1609.6,883.5 1610.9,887.3 1612.2,888.5 1613.4,894.0 1614.7,891.0 1616.0,894.4 1617.2,891.4 1618.4,890.5 1619.6,893.5 1620.8,890.6 1622.1,892.5 1623.3,889.0 1624.5,889.1 1625.7,889.3 1626.9,887.8 1628.1,890.5 1629.3,886.6 1630.5,886.7 1631.7,891.2 1633.0,890.3 1634.2,893.3 1635.4,890.5 1636.6,891.5 1637.8,892.2 1638.9,894.6 1640.0,897.7 1641.1,902.1 1642.2,905.3 1643.4,904.4 1644.7,904.7 1645.9,904.2 1647.1,901.9 1648.3,902.0 1649.5,899.1 1650.8,899.1 1652.0,898.8 1653.1,899.7 1654.2,902.0 1655.3,905.2 1656.4,908.5 1657.5,909.7 1658.7,908.1 1659.8,907.5 1661.0,909.9 1662.2,909.9 1663.3,908.0 1664.5,907.8 1665.7,906.5 1666.8,907.3 1668.0,908.6 1669.2,908.1 1670.3,907.3 1671.5,905.6 1672.7,906.5 1673.8,905.7 1675.0,906.4 1676.2,905.4 1677.4,904.6 1678.7,904.4 1679.9,903.7 1681.1,903.8 1682.3,902.1 1683.6,902.0 1684.8,904.8 1686.0,902.0 1687.3,903.5 1688.6,902.7 1689.9,905.7 1691.2,906.2 1692.5,906.4 1693.7,906.4 1694.8,906.6 1696.0,907.2 1697.2,905.2 1698.3,905.8 1699.5,906.7 1700.7,906.3 1701.8,906.1 1703.0,907.1 1704.2,906.7 1705.3,904.5 1706.5,904.9 1707.7,905.7 1708.8,905.9 1710.0,904.2 1711.2,904.6 1712.4,905.7 1713.7,905.4 1714.9,905.0 1716.1,908.7 1717.3,906.9 1718.6,907.8 1719.8,909.2 1721.0,909.7 1722.3,908.9 1723.6,907.5 1724.9,908.0 1726.2,907.9 1727.5,908.6 1728.6,911.2 1729.7,913.9 1730.8,918.3 1731.9,920.6 1733.1,919.9 1734.4,916.8 1735.6,918.1 1736.9,912.9 1738.1,914.8 1739.4,913.3 1740.6,909.7 1741.8,909.3 1743.0,905.9 1744.3,904.7 1745.5,900.1 1746.7,897.3 1747.9,900.0 1749.2,898.7 1750.4,892.8 1751.6,892.2 1752.8,894.3 1754.1,894.8 1755.3,893.2 1756.6,893.7 1757.8,888.8 1759.1,887.2 1760.3,890.0 1761.4,888.1 1762.5,882.9 1763.6,881.5 1764.7,880.6 1765.8,878.0 1766.9,874.6 1768.0,872.9 1769.1,874.7 1770.2,876.6 1771.3,872.5 1772.5,875.6 1773.8,875.6 1775.0,876.9 1776.3,875.4 1777.5,878.2 1778.8,876.5 1780.0,879.0 1781.2,880.0 1782.4,880.8 1783.7,881.7 1784.9,880.6 1786.1,884.2 1787.3,878.6 1788.6,883.6 1789.8,885.2 1791.0,884.5 1792.2,884.1 1793.5,883.6 1794.7,880.7 1796.0,882.9 1797.2,880.1 1798.5,880.9 1799.7,879.0 1800.8,880.2 1801.8,881.0 1802.9,881.4 1804.0,882.3 1804.5,868.0 1806.3,846.3 1807.4,844.5 1808.5,843.0" fill="none" stroke="#6aa860" stroke-width="3.4" stroke-linejoin="round"/>
<polyline points="5.8,988.0 7.0,986.1 8.3,985.9 9.6,987.5 10.8,986.0 12.0,985.2 13.2,987.6 14.3,993.6 15.5,995.6 16.7,995.0 18.0,997.6 19.2,998.5 20.5,999.0 21.7,1001.6 23.0,1001.0 24.2,1001.3 25.5,997.2 26.8,999.2 28.0,998.1 29.2,996.9 30.5,994.1 31.8,992.8 33.0,992.0 34.2,997.9 35.5,995.5 36.8,1001.0 38.0,1001.0 39.2,1000.0 40.3,997.9 41.5,995.2 42.7,994.6 43.8,993.7 45.0,991.0 46.1,992.5 47.2,992.3 48.4,992.2 49.5,992.1 50.6,990.8 51.7,988.5 53.0,990.6 54.2,987.5 55.5,991.0 56.7,988.0 58.0,988.8 59.2,989.1 60.5,994.1 61.7,993.1 63.0,991.5 64.2,994.3 65.5,997.1 66.8,997.0 68.0,998.0 69.2,993.6 70.5,993.5 71.8,989.0 73.0,988.0 74.2,988.9 75.4,985.4 76.6,985.8 77.8,989.0 79.0,987.2 80.2,987.6 81.4,987.1 82.6,988.9 83.8,986.5 85.0,986.0 86.2,984.9 87.3,988.8 88.5,987.9 89.7,987.0 90.8,984.9 92.0,988.4 93.2,988.9 94.4,989.6 95.5,990.1 96.7,989.0 98.0,987.4 99.2,994.8 100.5,996.6 101.7,1001.0 103.0,1001.5 104.2,1000.4 105.5,1000.1 106.7,999.7 108.0,1001.0 109.2,1001.9 110.5,998.6 111.7,995.1 113.0,995.6 114.2,991.1 115.5,992.3 116.7,989.0 118.0,989.0 119.2,992.6 120.5,995.8 121.7,993.1 123.0,996.1 124.2,992.9 125.5,995.6 126.7,997.0 128.0,997.5 129.2,993.3 130.5,994.7 131.7,994.2 133.0,991.0 134.2,990.5 135.5,995.1 136.8,994.9 138.0,997.0 139.2,995.3 140.5,998.5 141.8,991.6 143.0,993.6 144.2,990.8 145.5,991.8 146.8,990.2 148.0,987.0 149.2,988.4 150.5,987.2 151.8,985.8 153.0,989.0 154.2,992.8 155.5,993.3 156.8,994.0 158.0,991.5 159.2,995.2 160.3,992.6 161.5,994.0 162.7,998.1 163.8,999.0 165.0,1001.0 166.2,1001.9 167.3,1000.5 168.5,1001.6 169.7,1001.4 170.8,1002.6 172.0,1003.0 173.2,1001.2 174.5,1004.8 175.8,1006.6 177.0,1004.6 178.2,1001.0 179.5,1001.2 180.8,1002.1 182.0,1003.0 183.2,1003.7 184.4,995.3 185.6,992.4 186.8,996.4 188.0,993.0 189.2,990.3 190.5,990.6 191.7,990.5 193.0,991.5 194.2,989.2 195.5,988.0 196.7,990.0 197.9,992.1 199.1,988.1 200.3,991.2 201.4,994.9 202.6,996.7 203.8,995.8 205.0,996.7 206.2,994.5 207.5,991.9 208.8,989.9 210.0,988.0 211.1,988.5 212.2,986.4 213.3,988.0 214.5,991.4 215.6,992.3 216.7,990.0 217.9,983.7 219.2,977.6 220.4,975.3 221.7,970.0 222.9,970.6 224.1,969.7 225.3,965.3 226.4,960.8 227.6,966.4 228.8,960.4 230.0,963.0 231.2,967.2 232.5,962.4 233.8,962.0 235.0,965.0 236.2,970.4 237.5,976.7 238.8,982.1 240.0,983.0 241.1,983.1 242.2,982.8 243.3,981.0 244.5,975.8 245.6,976.2 246.7,975.0 247.8,961.8 248.9,951.7 250.0,943.0 251.1,946.1 252.3,946.1 253.4,947.2 254.6,947.4 255.7,953.5 256.9,956.2 258.0,955.0 259.2,954.3 260.5,952.8 261.7,950.1 263.0,952.1 264.2,945.2 265.5,946.7 266.7,943.0 267.9,944.4 269.2,944.7 270.4,946.2 271.7,950.0 272.9,945.3 274.2,943.3 275.4,937.8 276.7,935.0 277.9,935.3 279.2,936.8 280.4,934.6 281.7,938.0 282.9,940.9 284.2,942.2 285.4,945.6 286.7,950.0 287.9,949.7 289.2,952.7 290.4,954.6 291.7,958.2 292.9,958.4 294.2,961.8 295.4,963.1 296.7,963.0 297.8,961.5 298.9,958.9 300.0,959.0 301.2,958.3 302.5,957.9 303.8,953.1 305.0,950.6 306.2,952.4 307.5,948.4 308.8,946.6 310.0,948.1 311.2,942.9 312.5,943.0 313.6,947.4 314.8,954.2 315.9,956.9 317.0,965.0 318.2,961.9 319.4,957.8 320.7,958.8 321.9,954.9 323.1,950.3 324.4,946.2 325.6,949.1 326.8,943.0 328.1,947.8 329.3,949.9 330.6,949.7 331.9,953.4 333.2,954.0 334.4,959.8 335.7,960.0 336.9,958.0 338.1,955.3 339.3,954.1 340.5,951.1 341.6,949.1 342.8,944.2 344.0,944.5 345.2,945.5 346.4,938.6 347.6,936.8 348.8,937.1 349.9,936.8 351.1,933.4 352.3,931.4 353.5,934.0 354.6,933.8 355.8,930.6 357.0,930.6 358.1,936.8 359.2,936.7 360.4,940.1 361.5,941.0 362.8,937.3 364.0,935.4 365.3,931.8 366.5,927.5 367.8,927.0 369.0,924.6 370.2,930.5 371.4,929.9 372.5,932.2 373.7,936.0 374.9,936.0 376.2,934.6 377.4,931.1 378.7,929.2 380.0,925.3 381.3,926.9 382.5,924.5 383.8,920.0 385.0,923.8 386.2,923.6 387.4,924.9 388.6,926.6 389.8,928.9 391.0,928.0 392.2,926.3 393.3,920.9 394.5,921.5 395.7,919.2 396.8,915.1 398.0,914.5 399.2,913.7 400.5,918.0 401.7,919.9 402.9,925.1 404.1,925.5 405.4,922.8 406.6,923.2 407.8,927.4 409.0,928.5 410.3,932.9 411.5,933.0 412.7,934.3 413.9,934.6 415.2,933.2 416.4,932.8 417.6,932.5 418.8,931.4 420.0,925.5 421.2,925.1 422.5,925.0 423.7,927.5 424.9,926.2 426.1,924.7 427.3,926.4 428.6,923.2 429.8,924.9 431.0,923.5 432.2,924.5 433.5,927.2 434.8,926.0 436.0,932.4 437.2,932.2 438.5,930.9 439.8,933.7 441.0,937.0 442.2,933.1 443.4,935.4 444.5,934.0 445.7,938.1 446.9,941.9 448.1,940.9 449.2,939.1 450.4,939.0 451.6,943.0 452.8,941.9 454.0,941.8 455.2,936.8 456.4,939.8 457.5,940.2 458.7,940.4 459.9,936.1 461.1,937.4 462.3,935.0 463.5,934.8 464.8,938.2 466.0,940.0 467.3,935.9 468.5,937.3 469.7,939.4 471.0,945.4 472.2,948.3 473.4,949.1 474.7,952.9 475.9,949.5 477.2,955.1 478.4,952.0 479.6,949.1 480.7,946.0 481.9,945.1 483.1,948.6 484.3,945.2 485.4,943.6 486.6,942.3 487.8,937.9 489.0,937.4 490.1,932.2 491.3,932.9 492.5,931.7 493.7,928.8 494.8,928.9 496.0,925.0 497.2,925.9 498.5,928.9 499.7,927.4 500.9,930.0 502.2,932.8 503.4,934.4 504.7,932.6 505.9,931.6 507.1,939.0 508.4,937.9 509.6,935.5 510.8,935.5 512.1,937.0 513.3,940.9 514.6,940.5 515.8,943.0 517.0,940.5 518.3,940.3 519.5,940.5 520.8,939.5 522.0,935.2 523.2,939.7 524.5,934.4 525.7,933.3 526.9,931.6 528.2,931.3 529.4,932.6 530.7,933.0 531.9,930.6 533.1,931.9 534.3,934.2 535.5,938.7 536.7,941.3 537.8,942.1 539.0,945.9 540.2,945.5 541.4,945.5 542.6,950.0 543.8,951.4 545.0,951.3 546.2,949.1 547.4,952.8 548.5,950.5 549.7,947.9 550.9,952.4 552.1,953.3 553.3,951.0 554.5,945.3 555.7,938.7 556.9,932.0 558.2,934.7 559.4,935.6 560.7,935.1 562.0,936.4 563.3,933.1 564.5,930.6 565.8,934.0 567.0,929.2 568.2,922.4 569.4,916.0 570.6,912.1 571.8,911.3 573.0,910.3 574.1,911.2 575.3,906.8 576.5,905.9 577.7,903.6 578.9,904.9 580.0,905.6 581.2,900.9 582.4,898.8 583.6,898.5 585.0,901.3 586.3,903.0 587.6,905.0 589.0,909.0 590.2,909.9 591.3,906.1 592.5,908.3 593.7,903.1 594.8,903.2 596.0,902.0 597.2,900.4 598.3,904.5 599.5,907.3 600.7,910.7 601.8,904.4 603.0,907.0 604.2,903.4 605.4,898.1 606.6,894.6 607.8,892.1 609.0,891.0 610.7,920.0 611.9,914.5 613.1,907.3 614.2,904.8 615.4,902.0 616.6,892.8 617.8,889.6 618.9,891.8 620.0,891.7 621.2,892.5 622.3,893.0 623.6,897.2 625.0,907.8 626.3,917.4 627.6,922.6 628.9,918.8 630.1,915.1 631.4,908.5 632.6,901.9 633.9,899.0 635.1,902.8 636.4,905.1 637.6,906.7 638.9,911.7 640.1,917.8 641.4,916.0 642.6,918.2 643.9,923.1 645.1,925.7 646.4,927.0 647.6,923.8 648.8,919.9 650.0,917.4 651.1,910.9 652.3,908.0 653.5,905.6 654.9,911.3 656.2,914.1 657.5,919.0 658.9,920.0 660.1,916.7 661.4,913.6 662.6,914.3 663.8,909.0 665.0,904.6 666.2,902.3 667.5,898.9 668.7,899.0 669.8,899.8 671.0,905.8 672.1,911.8 673.3,917.4 674.4,917.3 675.6,918.9 676.7,925.0 678.0,925.6 679.2,926.8 680.5,925.7 681.8,925.4 683.1,926.1 684.3,929.4 685.6,929.7 686.8,923.9 688.0,926.8 689.2,921.6 690.4,923.9 691.6,921.6 692.8,916.0 694.1,911.1 695.4,907.6 696.7,902.4 698.0,901.0 699.2,898.4 700.4,901.1 701.6,901.0 702.8,906.3 704.0,908.5 705.2,906.3 706.4,907.1 707.6,906.3 708.8,909.0 710.0,903.5 711.2,901.0 712.4,895.0 713.7,895.0 714.9,895.1 716.2,897.4 717.5,896.9 718.8,899.8 720.0,899.9 721.3,896.7 722.5,893.7 723.7,891.0 724.8,894.9 726.0,896.0 727.2,889.2 728.4,889.6 729.7,897.4 731.0,902.0 732.2,898.0 733.5,894.8 734.7,887.0 735.8,889.4 737.0,889.4 738.1,892.0 739.3,894.5 740.4,896.7 741.6,902.2 742.7,902.0 743.9,902.5 745.1,898.3 746.2,895.1 747.4,895.4 748.6,893.5 749.8,893.0 751.0,891.7 752.2,892.1 753.4,892.5 754.6,895.0 755.8,892.5 757.0,892.0 758.2,891.9 759.5,897.7 760.7,896.5 762.0,899.7 763.2,903.0 764.3,898.7 765.5,895.9 766.6,891.9 767.7,888.7 768.9,891.9 770.1,892.1 771.3,894.2 772.5,897.6 773.6,900.1 774.8,899.9 776.0,904.0 777.2,903.3 778.4,907.4 779.7,904.2 781.0,904.9 782.4,904.2 783.7,903.0 785.0,906.8 786.4,909.7 787.7,911.4 789.0,911.0 790.2,911.2 791.4,907.7 792.6,904.4 793.8,905.1 795.0,898.2 796.2,900.0 797.4,897.4 798.6,899.1 799.8,895.7 801.0,895.2 802.2,894.9 803.4,892.6 804.6,894.4 805.8,889.1 807.0,889.6 808.3,892.7 809.5,889.3 810.8,893.8 812.0,898.5 813.3,898.0 814.5,900.6 815.8,902.0 817.0,899.3 818.3,897.2 819.5,895.5 820.8,896.9 822.0,894.1 823.3,894.6 824.5,894.3 825.8,895.8 827.0,892.9 828.3,891.0 829.5,890.4 830.7,889.7 831.8,892.6 833.0,894.5 834.2,895.8 835.4,891.7 836.6,893.6 837.7,893.1 838.9,893.5 840.1,899.8 841.3,899.7 842.5,896.2 843.6,894.8 844.8,896.7 846.0,898.5 847.2,900.5 848.4,896.3 849.6,893.1 850.9,891.8 852.1,890.3 853.3,891.0 854.5,888.7 855.7,889.3 856.8,889.6 858.0,888.9 859.2,885.4 860.4,886.0 861.6,884.7 862.8,884.8 863.9,883.2 865.1,884.3 866.3,882.4 867.5,880.2 868.6,881.3 869.8,881.7 871.0,879.0 872.1,876.6 873.3,875.1 874.5,874.3 875.6,871.7 877.0,877.5 878.3,881.5 879.5,878.7 880.7,879.8 881.8,877.9 883.0,876.1 884.2,875.1 885.4,873.5 886.6,872.4 887.8,875.9 888.9,875.7 890.1,878.6 891.3,880.4 892.5,880.6 893.6,878.6 894.8,881.6 896.0,882.0 897.2,880.5 898.3,878.2 899.5,877.7 900.7,874.9 901.8,873.9 903.0,873.5 904.2,872.7 905.4,872.8 906.7,874.8 907.9,873.4 909.1,873.9 910.3,873.2 911.6,875.7 912.8,877.9 914.0,877.0 915.2,874.5 916.5,872.3 917.7,874.2 918.9,872.0 920.2,868.1 921.4,866.0 922.6,870.4 923.8,870.8 925.0,871.7 926.2,874.2 927.3,882.1 928.5,884.0 929.7,893.6 930.8,898.8 932.0,909.0 933.2,907.4 934.5,903.1 935.7,900.0 937.5,909.0 938.8,905.6 940.1,902.1 941.5,899.2 942.8,896.7 944.0,897.0 945.2,898.3 946.4,898.9 947.6,899.7 948.7,899.9 949.9,899.9 951.1,900.1 952.3,900.7 953.5,902.0 954.7,899.9 955.8,898.5 957.0,895.8 958.2,895.8 959.4,896.6 960.6,897.8 961.8,897.0 963.0,898.1 964.2,899.1 965.4,898.9 966.6,899.4 967.8,899.4 969.0,898.2 970.3,899.5 971.5,896.4 972.8,897.4 974.0,896.7 975.3,896.4 976.5,896.4 977.8,894.9 979.0,893.4 980.3,894.0 981.5,894.0 982.8,895.6 984.0,895.0 985.3,894.8 986.5,894.5 987.8,893.6 989.0,894.0 990.2,894.8 991.4,894.1 992.6,893.9 993.8,894.9 995.0,895.4 996.2,893.9 997.4,895.0 998.6,895.9 999.8,896.6 1001.0,896.8 1002.2,896.8 1003.4,896.3 1004.6,897.5 1005.8,896.7 1007.0,897.6 1008.2,897.5 1009.4,896.9 1010.6,898.5 1011.8,896.7 1012.9,895.6 1014.1,895.9 1015.3,896.6 1016.5,894.8 1017.7,894.2 1018.9,895.5 1020.1,894.0 1021.3,894.0 1022.5,893.8 1023.6,893.2 1024.8,892.8 1026.0,892.4 1027.2,891.9 1028.4,893.0 1029.7,890.5 1031.0,887.0 1032.0,898.2 1032.9,907.4 1034.1,907.1 1035.4,905.8 1036.6,907.1 1037.8,901.7 1039.0,902.7 1040.2,901.2 1041.5,898.7 1042.7,897.6 1044.0,898.6 1045.2,897.7 1046.5,897.6 1047.8,897.8 1049.1,899.6 1050.3,901.5 1051.6,900.0 1052.9,900.4 1054.1,901.2 1055.4,904.5 1056.7,905.3 1058.0,904.9 1059.2,908.7 1060.5,911.0 1061.7,911.3 1062.9,908.4 1064.1,905.7 1065.3,906.8 1066.5,906.1 1067.7,904.0 1068.9,903.9 1070.1,904.5 1071.3,907.1 1072.5,906.5 1073.6,908.4 1074.8,909.8 1076.0,909.7 1077.2,912.1 1078.4,912.8 1079.7,917.4 1081.1,921.4 1082.4,923.7 1083.7,925.0 1085.0,921.9 1086.2,926.1 1087.5,922.9 1088.8,919.7 1090.1,921.3 1091.3,916.7 1092.6,917.0 1093.8,918.5 1095.1,915.9 1096.3,918.4 1097.6,913.9 1098.8,914.2 1100.0,917.7 1101.3,913.6 1102.5,913.2 1103.8,916.7 1105.0,914.5 1106.2,918.2 1107.4,917.0 1108.7,919.1 1109.9,920.0 1111.1,920.8 1112.3,923.5 1113.5,926.0 1114.7,927.5 1115.9,923.6 1117.1,922.2 1118.2,926.0 1119.4,925.5 1120.6,924.2 1121.8,926.9 1123.0,925.0 1124.3,921.1 1125.5,917.6 1126.8,915.2 1128.1,911.4 1129.4,910.0 1130.6,908.9 1131.9,905.6 1133.1,904.7 1134.3,908.7 1135.5,912.1 1136.6,910.3 1137.8,910.6 1139.0,914.5 1140.2,916.1 1141.4,916.4 1142.6,918.4 1143.8,919.6 1144.9,921.2 1146.1,921.0 1147.3,923.6 1148.5,925.6 1149.7,927.0 1150.9,925.7 1152.1,924.4 1153.3,925.1 1154.5,924.6 1155.6,923.9 1156.8,921.7 1158.0,920.4 1159.2,919.9 1160.4,921.7 1161.7,917.6 1162.9,917.8 1164.2,918.1 1165.4,919.6 1166.7,912.9 1168.0,912.4 1169.2,910.8 1170.5,910.5 1171.7,908.4 1173.0,903.8 1174.3,904.2 1175.7,904.6 1177.0,912.5 1178.3,914.5 1179.5,913.4 1180.7,908.0 1181.8,903.7 1183.0,905.5 1184.2,902.7 1185.4,898.5 1186.6,898.5 1187.8,899.3 1189.0,895.5 1190.2,898.3 1191.4,896.8 1192.6,897.0 1193.7,894.8 1194.9,891.7 1196.1,894.0 1197.3,891.4 1198.5,889.6 1199.7,891.0 1200.9,893.1 1202.1,895.9 1203.3,897.3 1204.6,901.9 1205.8,901.5 1207.0,905.6 1208.1,905.8 1209.2,902.4 1210.3,902.0 1211.4,895.1 1212.5,895.0 1213.7,898.9 1214.8,903.4 1216.0,909.0 1217.1,909.1 1218.2,908.7 1219.2,907.9 1220.3,906.6 1221.4,905.6 1222.6,906.7 1223.9,906.1 1225.1,907.3 1226.4,903.6 1227.6,902.0 1228.8,904.4 1229.9,902.5 1231.1,905.7 1232.2,902.2 1233.4,905.6 1234.5,908.8 1235.7,911.0 1236.9,910.2 1238.1,913.0 1239.2,909.6 1240.4,911.5 1241.6,913.9 1242.8,912.8 1244.0,913.5 1245.2,916.5 1246.5,920.1 1247.7,918.9 1248.9,921.7 1250.1,923.7 1251.4,920.5 1252.6,927.0 1253.7,922.0 1254.9,924.8 1256.0,920.9 1257.2,921.4 1258.3,920.3 1259.5,922.3 1260.6,915.4 1261.9,916.6 1263.1,921.7 1264.4,923.5 1265.6,924.6 1266.9,927.0 1268.1,923.9 1269.2,926.7 1270.4,926.1 1271.5,926.9 1272.7,922.1 1273.8,920.4 1275.0,921.7 1276.2,919.5 1277.3,920.6 1278.5,922.8 1279.7,925.3 1280.8,921.3 1282.0,921.2 1283.2,923.6 1284.3,924.5 1285.5,921.6 1286.7,923.0 1287.8,921.3 1289.0,921.7 1290.2,921.3 1291.4,923.5 1292.7,920.3 1293.9,916.3 1295.1,916.0 1296.3,915.4 1297.5,918.4 1298.7,919.9 1299.9,917.1 1301.1,920.8 1302.3,922.0 1303.4,920.1 1304.6,920.3 1305.8,923.1 1307.0,923.3 1308.2,927.1 1309.4,925.9 1310.6,927.0 1311.8,926.5 1313.0,926.8 1314.2,929.3 1315.4,928.6 1316.5,925.3 1317.7,927.8 1318.9,925.0 1320.1,925.9 1321.3,926.0 1322.5,925.7 1323.7,925.4 1324.9,928.7 1326.1,924.6 1327.3,923.5 1328.4,925.2 1329.6,923.3 1330.8,921.1 1332.0,920.7 1333.2,919.0 1334.4,920.2 1335.6,917.0 1336.8,917.6 1338.0,917.9 1339.2,917.4 1340.3,921.1 1341.5,918.9 1342.7,921.7 1344.0,917.5 1345.2,917.9 1346.5,916.5 1347.8,916.1 1349.1,915.9 1350.3,915.1 1351.6,911.0 1352.7,906.6 1353.8,903.8 1354.8,906.5 1355.9,903.2 1357.0,900.3 1358.2,902.6 1359.3,905.3 1360.5,905.6 1361.7,904.8 1362.8,902.3 1364.0,902.0 1365.1,906.5 1366.2,903.6 1367.3,905.4 1368.4,905.8 1369.5,911.0 1370.8,912.6 1372.0,912.2 1373.3,910.9 1374.6,906.0 1375.9,905.2 1377.1,902.2 1378.4,903.8 1379.5,899.2 1380.6,895.9 1381.7,889.0 1382.8,884.2 1384.0,884.1 1385.3,885.4 1386.5,884.9 1387.8,885.5 1389.0,887.8 1390.2,886.0 1391.4,889.1 1392.6,888.2 1393.8,888.1 1395.0,885.7 1396.2,891.4 1397.5,891.6 1398.7,891.1 1400.0,888.4 1401.2,887.5 1402.5,884.6 1403.7,881.4 1405.0,882.4 1406.3,884.0 1407.5,888.8 1408.8,890.2 1410.0,889.2 1411.3,894.4 1412.6,892.7 1413.8,897.9 1415.1,898.0 1416.3,897.9 1417.6,902.0 1418.7,898.7 1419.8,894.0 1420.8,890.4 1421.9,888.4 1423.0,887.8 1424.2,892.5 1425.3,894.0 1426.5,895.6 1427.7,897.3 1428.8,902.9 1430.0,905.6 1431.2,900.2 1432.5,888.4 1433.7,882.4 1435.0,877.2 1436.3,877.5 1437.7,875.2 1439.0,871.7 1440.1,875.2 1441.2,875.1 1442.2,875.1 1443.3,876.7 1444.4,880.6 1445.7,879.6 1446.9,880.6 1448.2,878.7 1449.5,881.2 1450.8,881.7 1452.0,880.3 1453.3,880.6 1455.0,864.6 1456.2,865.0 1457.4,864.8 1458.6,865.2 1459.8,864.8 1461.0,864.5 1462.2,865.9 1463.4,866.7 1464.6,865.8 1465.8,864.6 1467.0,867.9 1468.3,865.6 1469.5,866.2 1470.8,867.6 1472.0,868.0 1473.3,870.4 1474.5,870.9 1475.8,871.3 1477.0,872.0 1478.3,871.7 1479.5,871.2 1480.7,873.5 1481.8,874.1 1483.0,874.3 1484.2,876.6 1485.4,877.0 1486.6,873.9 1487.8,873.8 1489.0,873.5 1490.3,877.8 1491.7,881.3 1493.0,882.1 1494.3,886.0 1495.4,887.3 1496.5,889.5 1497.5,895.7 1498.6,900.6 1499.7,903.8 1500.9,904.1 1502.1,896.9 1503.2,899.4 1504.4,892.1 1505.6,894.6 1506.8,891.4 1507.8,894.2 1508.9,897.4 1510.0,904.0 1511.0,905.3 1512.1,908.2 1513.2,908.8 1514.2,912.5 1515.3,914.2 1516.4,916.3 1517.6,914.3 1518.8,919.7 1520.0,914.7 1521.2,912.3 1522.4,914.4 1523.6,915.0 1524.8,915.5 1526.0,915.7 1527.2,911.2 1528.4,912.0 1529.7,912.3 1531.0,911.9 1532.4,915.3 1533.7,918.5 1535.0,922.8 1536.1,918.7 1537.2,914.6 1538.3,910.3 1539.4,907.5 1540.7,907.7 1542.0,902.7 1543.4,901.0 1544.7,902.0 1546.0,898.8 1547.2,897.0 1548.5,900.1 1549.7,897.2 1551.0,896.4 1552.2,895.6 1553.5,897.9 1554.7,897.7 1555.9,898.1 1557.1,896.8 1558.3,900.5 1559.5,898.3 1560.8,896.4 1562.0,899.8 1563.2,900.9 1564.4,905.5 1565.6,901.0 1566.7,902.3 1567.8,906.7 1568.9,905.6 1570.0,909.7 1571.2,908.4 1572.4,910.3 1573.7,906.5 1574.9,909.9 1576.1,907.2 1577.3,907.0 1578.6,908.9 1579.8,908.3 1581.0,906.4 1582.2,905.4 1583.5,902.5 1584.7,899.3 1586.0,900.3 1587.2,894.6 1588.5,893.9 1589.7,892.2 1590.9,891.0 1592.1,891.6 1593.3,891.8 1594.5,892.2 1595.8,891.9 1597.0,890.3 1598.2,893.9 1599.4,895.1 1600.6,895.5 1601.9,892.8 1603.2,895.8 1604.4,891.0 1605.7,889.4 1607.0,892.2 1608.3,885.6 1609.6,883.5 1610.9,887.3 1612.2,888.5 1613.4,894.0 1614.7,891.0 1616.0,894.4 1617.2,891.4 1618.4,890.5 1619.6,893.5 1620.8,890.6 1622.1,892.5 1623.3,889.0 1624.5,889.1 1625.7,889.3 1626.9,887.8 1628.1,890.5 1629.3,886.6 1630.5,886.7 1631.7,891.2 1633.0,890.3 1634.2,893.3 1635.4,890.5 1636.6,891.5 1637.8,892.2 1638.9,894.6 1640.0,897.7 1641.1,902.1 1642.2,905.3 1643.4,904.4 1644.7,904.7 1645.9,904.2 1647.1,901.9 1648.3,902.0 1649.5,899.1 1650.8,899.1 1652.0,898.8 1653.1,899.7 1654.2,902.0 1655.3,905.2 1656.4,908.5 1657.5,909.7 1658.7,908.1 1659.8,907.5 1661.0,909.9 1662.2,909.9 1663.3,908.0 1664.5,907.8 1665.7,906.5 1666.8,907.3 1668.0,908.6 1669.2,908.1 1670.3,907.3 1671.5,905.6 1672.7,906.5 1673.8,905.7 1675.0,906.4 1676.2,905.4 1677.4,904.6 1678.7,904.4 1679.9,903.7 1681.1,903.8 1682.3,902.1 1683.6,902.0 1684.8,904.8 1686.0,902.0 1687.3,903.5 1688.6,902.7 1689.9,905.7 1691.2,906.2 1692.5,906.4 1693.7,906.4 1694.8,906.6 1696.0,907.2 1697.2,905.2 1698.3,905.8 1699.5,906.7 1700.7,906.3 1701.8,906.1 1703.0,907.1 1704.2,906.7 1705.3,904.5 1706.5,904.9 1707.7,905.7 1708.8,905.9 1710.0,904.2 1711.2,904.6 1712.4,905.7 1713.7,905.4 1714.9,905.0 1716.1,908.7 1717.3,906.9 1718.6,907.8 1719.8,909.2 1721.0,909.7 1722.3,908.9 1723.6,907.5 1724.9,908.0 1726.2,907.9 1727.5,908.6 1728.6,911.2 1729.7,913.9 1730.8,918.3 1731.9,920.6 1733.1,919.9 1734.4,916.8 1735.6,918.1 1736.9,912.9 1738.1,914.8 1739.4,913.3 1740.6,909.7 1741.8,909.3 1743.0,905.9 1744.3,904.7 1745.5,900.1 1746.7,897.3 1747.9,900.0 1749.2,898.7 1750.4,892.8 1751.6,892.2 1752.8,894.3 1754.1,894.8 1755.3,893.2 1756.6,893.7 1757.8,888.8 1759.1,887.2 1760.3,890.0 1761.4,888.1 1762.5,882.9 1763.6,881.5 1764.7,880.6 1765.8,878.0 1766.9,874.6 1768.0,872.9 1769.1,874.7 1770.2,876.6 1771.3,872.5 1772.5,875.6 1773.8,875.6 1775.0,876.9 1776.3,875.4 1777.5,878.2 1778.8,876.5 1780.0,879.0 1781.2,880.0 1782.4,880.8 1783.7,881.7 1784.9,880.6 1786.1,884.2 1787.3,878.6 1788.6,883.6 1789.8,885.2 1791.0,884.5 1792.2,884.1 1793.5,883.6 1794.7,880.7 1796.0,882.9 1797.2,880.1 1798.5,880.9 1799.7,879.0 1800.8,880.2 1801.8,881.0 1802.9,881.4 1804.0,882.3 1804.5,868.0 1806.3,846.3 1807.4,844.5 1808.5,843.0" fill="none" stroke="#ff6c14" stroke-width="2.8" stroke-linejoin="round"/>
<g fill="#f6fbe8" stroke="#f6fbe8"><rect x="4.2" y="11.5" width="6.8" height="6.3" stroke="none"/><rect x="7" y="9" width="1.2" height="11" stroke="none"/><rect x="12.7" y="7.7" width="5.7" height="9.6" fill="none" stroke-width="1.1"/><rect x="15" y="4" width="1.1" height="16" stroke="none"/></g>
<polygon points="24,11 31,11 27.5,15" fill="#f6fbe8"/>
<text x="35" y="16" font-size="12" font-weight="700" fill="#f6fbe8" text-anchor="start" textLength="16.5" lengthAdjust="spacingAndGlyphs" >DJI</text>
<rect x="64.5" y="6.5" width="11" height="11" fill="#f2f2f2" stroke="#ffffff" stroke-width="1"/>
<text x="70" y="16.8" font-size="13.5" font-weight="700" fill="#4a4a58" text-anchor="middle" style="font-family:'Liberation Serif'">i</text>
<rect x="85.5" y="4.5" width="92" height="15.5" fill="#1fb41f"/>
<rect x="85.5" y="4.5" width="92" height="3" fill="#35c835" opacity="0.6"/>
<text x="87.3" y="15.6" font-size="11" font-weight="700" fill="#f4fbe8" text-anchor="start" textLength="88.7" lengthAdjust="spacingAndGlyphs" >23 674,0 (+1,14%)</text>
<text x="183.4" y="15.6" font-size="11" font-weight="700" fill="#f4fbe8" text-anchor="start" textLength="40.6" lengthAdjust="spacingAndGlyphs" >15:38:01</text>
<text x="230" y="15.6" font-size="11" font-weight="700" fill="#f4fbe8" text-anchor="start" textLength="118.3" lengthAdjust="spacingAndGlyphs" >Wall Street Cash (10$)</text>
<g><rect x="1848" y="6" width="19.7" height="13.6" rx="2" fill="#f4f8ee"/><rect x="1851" y="9.2" width="1.7" height="1.7" fill="#3a4a32"/><rect x="1854" y="9.2" width="1.7" height="1.7" fill="#3a4a32"/><rect x="1857" y="9.2" width="1.7" height="1.7" fill="#3a4a32"/><rect x="1860" y="9.2" width="1.7" height="1.7" fill="#3a4a32"/><rect x="1863" y="9.2" width="1.7" height="1.7" fill="#3a4a32"/><rect x="1851" y="12.2" width="1.7" height="1.7" fill="#3a4a32"/><rect x="1854" y="12.2" width="1.7" height="1.7" fill="#3a4a32"/><rect x="1857" y="12.2" width="1.7" height="1.7" fill="#3a4a32"/><rect x="1860" y="12.2" width="1.7" height="1.7" fill="#3a4a32"/><rect x="1863" y="12.2" width="1.7" height="1.7" fill="#3a4a32"/><rect x="1854" y="16" width="7.8" height="1.4" fill="#3a4a32"/><rect x="1874" y="14.2" width="9" height="1.8" fill="#f4f8ee"/><rect x="1893.6" y="7.6" width="4" height="5.4" fill="none" stroke="#f4f8ee" stroke-width="1.2"/><rect x="1893" y="7" width="5.2" height="1.6" fill="#f4f8ee"/><rect x="1889.6" y="11.6" width="4.8" height="4.6" fill="#5a8c48" stroke="#f4f8ee" stroke-width="1.2"/><rect x="1889" y="11" width="6" height="1.6" fill="#f4f8ee"/><path d="M1904.5 7.5 L1912.5 15.5 M1912.5 7.5 L1904.5 15.5" stroke="#f4f8ee" stroke-width="2"/></g>
<text x="297.5" y="39" font-size="11" font-weight="400" fill="#111" text-anchor="start" textLength="38.7" lengthAdjust="spacingAndGlyphs" >Ordres :</text>
<text x="342" y="39" font-size="11" font-weight="700" fill="#000" text-anchor="start" >0</text>
<rect x="351.5" y="28.5" width="12" height="11" fill="#dcdcdc" stroke="#c4c4c4"/>
<path d="M354 31 L361 37 M361 31 L354 37" stroke="#b8b8b8" stroke-width="2"/>
<text x="372" y="39" font-size="11" font-weight="400" fill="#111" text-anchor="start" >/</text>
<text x="381" y="39" font-size="11" font-weight="700" fill="#000" text-anchor="start" >0</text>
<g transform="translate(389.5,29)"><circle cx="5" cy="5" r="3.6" fill="none" stroke="#2a56c8" stroke-width="2.6" stroke-dasharray="1.6 1.2"/><circle cx="5" cy="5" r="2.8" fill="none" stroke="#2a56c8" stroke-width="1.6"/><circle cx="11" cy="9.5" r="2.6" fill="none" stroke="#2a56c8" stroke-width="2" stroke-dasharray="1.3 1"/><circle cx="11" cy="9.5" r="2" fill="none" stroke="#2a56c8" stroke-width="1.2"/></g>
<text x="701.7" y="39" font-size="11" font-weight="400" fill="#111" text-anchor="start" textLength="41.5" lengthAdjust="spacingAndGlyphs" >Position :</text>
<text x="752" y="39" font-size="11" font-weight="700" fill="#000" text-anchor="start" >0</text>
<rect x="760.5" y="28.5" width="12" height="11" fill="#ececec" stroke="#d4d4d4"/>
<path d="M763 31 L770 37 M770 31 L763 37" stroke="#f0b0b0" stroke-width="2"/>
<text x="781.5" y="39" font-size="11" font-weight="400" fill="#111" text-anchor="start" >/</text>
<text x="790" y="39" font-size="11" font-weight="700" fill="#000" text-anchor="start" >0</text>
<g transform="translate(797.5,29)"><circle cx="5" cy="5" r="3.6" fill="none" stroke="#2a56c8" stroke-width="2.6" stroke-dasharray="1.6 1.2"/><circle cx="5" cy="5" r="2.8" fill="none" stroke="#2a56c8" stroke-width="1.6"/><circle cx="11" cy="9.5" r="2.6" fill="none" stroke="#2a56c8" stroke-width="2" stroke-dasharray="1.3 1"/><circle cx="11" cy="9.5" r="2" fill="none" stroke="#2a56c8" stroke-width="1.2"/></g>
<text x="1111.3" y="39" font-size="11" font-weight="400" fill="#111" text-anchor="start" textLength="55.8" lengthAdjust="spacingAndGlyphs" >Gain latent :</text>
<text x="1179.1" y="39" font-size="11" font-weight="700" fill="#000" text-anchor="start" textLength="29.6" lengthAdjust="spacingAndGlyphs" >0,00 €</text>
<text x="1508.6" y="39" font-size="11" font-weight="400" fill="#111" text-anchor="start" textLength="50.7" lengthAdjust="spacingAndGlyphs" >Gain Jour :</text>
<text x="1565.1" y="39" font-size="11" font-weight="700" fill="#2d9a2d" text-anchor="start" textLength="41.6" lengthAdjust="spacingAndGlyphs" >312,37 €</text>
<rect x="8.5" y="57.5" width="24.5" height="24" fill="#cdcdcd" stroke="#c4c4c4"/>
<rect x="86.5" y="57.5" width="25" height="24.5" fill="#f0f0f0" stroke="#d6d6d6"/>
<path d="M17.5 62.5 L17.5 75 L20.3 72.4 L22.4 77.2 L24.2 76.4 L22.2 71.7 L26 71.5 Z" fill="#f2f2f2" stroke="#6a6a6a" stroke-width="0.9"/>
<circle cx="44.5" cy="68.5" r="5.2" fill="#dcdcdc" stroke="#111" stroke-width="1.6"/><path d="M48.3 72.3 L54 78" stroke="#111" stroke-width="2.6" stroke-linecap="round"/>
<path d="M67 75 Q67.5 66 72 64.5 Q76.5 66 77 75 Z" fill="#f0e020" stroke="#a09010" stroke-width="0.9"/><rect x="65.5" y="74" width="13" height="2.2" fill="#e8d820" stroke="#a09010" stroke-width="0.7"/><circle cx="72" cy="77.6" r="1.3" fill="#c8b810"/><circle cx="72" cy="63.8" r="1" fill="#c8b810"/><path d="M63.5 64 q-1 2 0 4 M80.5 64 q1 2 0 4 M65.5 63 q-.8 1.5 0 3 M78.5 63 q.8 1.5 0 3" stroke="#777" stroke-width="0.7" fill="none"/>
<g transform="translate(99,70) rotate(-40)"><rect x="-9" y="-3.5" width="18" height="7" fill="#e6e6e6" stroke="#777" stroke-width="0.9"/><path d="M-7.0 -3.5 v3" stroke="#777" stroke-width="0.6"/><path d="M-4.5 -3.5 v3" stroke="#777" stroke-width="0.6"/><path d="M-2.0 -3.5 v3" stroke="#777" stroke-width="0.6"/><path d="M0.5 -3.5 v3" stroke="#777" stroke-width="0.6"/><path d="M3.0 -3.5 v3" stroke="#777" stroke-width="0.6"/><path d="M5.5 -3.5 v3" stroke="#777" stroke-width="0.6"/><path d="M8.0 -3.5 v3" stroke="#777" stroke-width="0.6"/></g>
<path d="M121 74.5 L129 66.5" stroke="#111" stroke-width="1.1"/><path d="M119.0 74 H124.0 M121.5 71.5 V76.5" stroke="#1818c0" stroke-width="1.0"/><path d="M120.2 72.7 L122.8 75.3 M122.8 72.7 L120.2 75.3" stroke="#1818c0" stroke-width="0.7"/><path d="M126.0 67 H131.0 M128.5 64.5 V69.5" stroke="#1818c0" stroke-width="1.0"/><path d="M127.2 65.7 L129.8 68.3 M129.8 65.7 L127.2 68.3" stroke="#1818c0" stroke-width="0.7"/>
<path d="M140 81 L162 59" stroke="#111" stroke-width="1.1"/><path d="M142.5 76 H147.5 M145 73.5 V78.5" stroke="#1818c0" stroke-width="1.0"/><path d="M143.7 74.7 L146.3 77.3 M146.3 74.7 L143.7 77.3" stroke="#1818c0" stroke-width="0.7"/><path d="M153.0 65.5 H158.0 M155.5 63.0 V68.0" stroke="#1818c0" stroke-width="1.0"/><path d="M154.2 64.2 L156.8 66.8 M156.8 64.2 L154.2 66.8" stroke="#1818c0" stroke-width="0.7"/>
<path d="M166 70.3 H188" stroke="#111" stroke-width="1.1"/><path d="M175.0 70.3 H180.0 M177.5 67.8 V72.8" stroke="#1818c0" stroke-width="1.0"/><path d="M176.2 69.0 L178.8 71.6 M178.8 69.0 L176.2 71.6" stroke="#1818c0" stroke-width="0.7"/>
<path d="M203.6 59 V81" stroke="#111" stroke-width="1.1"/><path d="M201.1 70 H206.1 M203.6 67.5 V72.5" stroke="#1818c0" stroke-width="1.0"/><path d="M202.29999999999998 68.7 L204.9 71.3 M204.9 68.7 L202.29999999999998 71.3" stroke="#1818c0" stroke-width="0.7"/>
<path d="M224.5 66.4 L230.7 60.2 M221.6 77.3 L234.7 64.2 M229.6 77.3 L238.4 68.2 M224.5 66.4 L229.6 77.3" stroke="#111" stroke-width="1.1"/><path d="M222.0 66.4 H227.0 M224.5 63.900000000000006 V68.9" stroke="#1818c0" stroke-width="1.0"/><path d="M223.2 65.10000000000001 L225.8 67.7 M225.8 65.10000000000001 L223.2 67.7" stroke="#1818c0" stroke-width="0.7"/><path d="M219.1 77.3 H224.1 M221.6 74.8 V79.8" stroke="#1818c0" stroke-width="1.0"/><path d="M220.29999999999998 76.0 L222.9 78.6 M222.9 76.0 L220.29999999999998 78.6" stroke="#1818c0" stroke-width="0.7"/><path d="M227.1 77.3 H232.1 M229.6 74.8 V79.8" stroke="#1818c0" stroke-width="1.0"/><path d="M228.29999999999998 76.0 L230.9 78.6 M230.9 76.0 L228.29999999999998 78.6" stroke="#1818c0" stroke-width="0.7"/>
<g stroke="#111" stroke-width="1"><path d="M249 63.5 H262" stroke-dasharray="13 0"/><path d="M249 65.8 H262" stroke-dasharray="2 1"/><path d="M249 68.1 H262" stroke-dasharray="13 0"/><path d="M249 70.4 H262" stroke-dasharray="2 1"/><path d="M249 72.7 H262" stroke-dasharray="13 0"/><path d="M249 75.0 H262" stroke-dasharray="2 1"/></g><path d="M244.5 79.5 L247 77 L249 80 L252 74 L256 69 L259 64 L265 59" stroke="#2ca02c" stroke-width="0.9" fill="none"/><path d="M244.5 80 L247 76.5" stroke="#e03030" stroke-width="0.9"/>
<path d="M270 72 L273 78 L277 68 L280 76 L285 64 L288 72 L292 62" stroke="#c8806a" stroke-width="0.9" fill="none"/><path d="M271 74 L273 69 M285 64 L292 61" stroke="#30a030" stroke-width="0.9"/><path d="M270 74.5 L292 64" stroke="#111" stroke-width="1.2"/>
<path d="M302.5 66 L303.8 77.2 Q307.5 78.4 311.2 77.2 L312.5 66 Z" fill="#c8c8c8" stroke="#3a3a3a" stroke-width="1"/><ellipse cx="307.5" cy="65" rx="6" ry="1.8" fill="#d8d8d8" stroke="#3a3a3a" stroke-width="1"/><path d="M305.5 63.2 q2 -2 4 0" fill="none" stroke="#3a3a3a" stroke-width="1"/><path d="M305.3 68 v8 M307.5 68 v8.5 M309.7 68 v8" stroke="#6a6a6a" stroke-width="0.8"/>
<path d="M329.5 66 L338.5 75.5 L336.5 77.5 L327.5 68 Q324 69 323.8 65.5 L325.8 66.8 L327.6 65 L326.2 63 Q329.8 62.6 329.5 66 Z" fill="#fafafa" stroke="#222" stroke-width="0.9" stroke-linejoin="round"/><path d="M327.2 76.6 L335.2 68.6" stroke="#222" stroke-width="3.2"/><path d="M327.2 76.6 L335.2 68.6" stroke="#b0b0b0" stroke-width="1.8"/><rect x="334.3" y="61.3" width="7.2" height="5" fill="#111" transform="rotate(45 337.9 63.8)"/>
<path d="M354 75.5 L365 64.5" stroke="#1a1ac8" stroke-width="1.1"/><rect x="353" y="74.5" width="2.5" height="2.5" fill="#1a1ac8"/><rect x="363.8" y="63.3" width="2.5" height="2.5" fill="#1a1ac8"/><path d="M357.0 70 H362.0 M359.5 67.5 V72.5" stroke="#1818c0" stroke-width="1.0"/><path d="M358.2 68.7 L360.8 71.3 M360.8 68.7 L358.2 71.3" stroke="#1818c0" stroke-width="0.7"/>
<path d="M376 74.5 L389 61.5" stroke="#111" stroke-width="1.1"/><path d="M380 79 L394 65" stroke="#1a1ac8" stroke-width="1.1"/><path d="M381.0 68 H386.0 M383.5 65.5 V70.5" stroke="#1818c0" stroke-width="1.0"/><path d="M382.2 66.7 L384.8 69.3 M384.8 66.7 L382.2 69.3" stroke="#1818c0" stroke-width="0.7"/><path d="M384.0 71 H389.0 M386.5 68.5 V73.5" stroke="#1818c0" stroke-width="1.0"/><path d="M385.2 69.7 L387.8 72.3 M387.8 69.7 L385.2 72.3" stroke="#1818c0" stroke-width="0.7"/>
<path d="M403.5 62.5 H418.5 V75.5 L416 77.5 H403.5 Z" fill="#f8f8f8" stroke="#111" stroke-width="1"/><text x="411" y="74" font-size="11" font-weight="700" text-anchor="middle" fill="#111" style="font-family:&quot;Liberation Serif&quot;">T</text>
<path d="M431 67.5 H437 V64 L443.5 69.5 L437 75 V71.5 H431 Z" fill="#111" stroke="#333" stroke-width="0.6"/>
<path d="M460.5 76 V70 H457.5 L463.5 63 L469.5 70 H466.5 V76 Z" fill="#38b038" stroke="#207020" stroke-width="0.8"/>
<path d="M486.5 63 V69.5 H483.5 L489.5 76 L495.5 69.5 H492.5 V63 Z" fill="#e04040" stroke="#a02020" stroke-width="0.8"/>
<rect x="505" y="64" width="17" height="12" fill="none" stroke="#c8c8e0" stroke-width="0.6"/><ellipse cx="514.5" cy="70" rx="9" ry="6" fill="none" stroke="#111" stroke-width="1.1"/><path d="M504 64.5 h5 M506.5 62 v5 M521 77 h5 M523.5 74.5 v5" stroke="#1a1ac8" stroke-width="1"/>
<rect x="532.5" y="64" width="17.5" height="12" fill="none" stroke="#111" stroke-width="1.1"/><path d="M530.0 63.5 H535.0 M532.5 61.0 V66.0" stroke="#1818c0" stroke-width="1.0"/><path d="M531.2 62.2 L533.8 64.8 M533.8 62.2 L531.2 64.8" stroke="#1818c0" stroke-width="0.7"/><path d="M547.0 76.5 H552.0 M549.5 74.0 V79.0" stroke="#1818c0" stroke-width="1.0"/><path d="M548.2 75.2 L550.8 77.8 M550.8 75.2 L548.2 77.8" stroke="#1818c0" stroke-width="0.7"/>
<path d="M567.5 63 L561 77 H575 Z" fill="none" stroke="#111" stroke-width="1.1"/><path d="M565.5 63 h4 M567.5 61 v4 M559 77 h4 M561 75 v4 M573 77 h4 M575 75 v4" stroke="#1a1ac8" stroke-width="1"/>
<rect x="588" y="62" width="15" height="1.8" fill="#e02020"/><rect x="583" y="76.5" width="20" height="2" fill="#20b020"/><path d="M584 74 L588 66 L591 73 L596 67 L599 70 L602 64" stroke="#e05050" stroke-width="0.9" fill="none"/><path d="M591 73 L596 67" stroke="#30a030" stroke-width="0.9"/>
<path d="M609 61 L629 66" stroke="#e02020" stroke-width="1.8"/><path d="M609 79 L629 73" stroke="#20b020" stroke-width="1.8"/><path d="M611 64 L614 76 L617 64 L620 75 L623 66 L626 74" stroke="#e05050" stroke-width="0.8" fill="none"/>
<path d="M635 64.5 H655 M635 75.5 H655" stroke="#111" stroke-width="1.1"/><path d="M639 65 V75 M637.2 67 L639 65 L640.8 67" stroke="#1a1ac8" stroke-width="1" fill="none"/><text x="648" y="73.5" font-size="10" font-weight="700" fill="#1a1ac8" text-anchor="middle">%</text>
<rect x="660.3" y="60.2" width="9.6" height="9.4" rx="1.5" fill="#ffffff" stroke="rgba(0,0,0,0.12)" stroke-width="0.6"/>
<rect x="671.3" y="60.2" width="9.6" height="9.4" rx="1.5" fill="#d8d8d8" stroke="rgba(0,0,0,0.12)" stroke-width="0.6"/>
<rect x="682.3" y="60.2" width="9.6" height="9.4" rx="1.5" fill="#b8b8b8" stroke="rgba(0,0,0,0.12)" stroke-width="0.6"/>
<rect x="693.3" y="60.2" width="9.6" height="9.4" rx="1.5" fill="#9a9a9a" stroke="rgba(0,0,0,0.12)" stroke-width="0.6"/>
<rect x="704.3" y="60.2" width="9.6" height="9.4" rx="1.5" fill="#7c7c7c" stroke="rgba(0,0,0,0.12)" stroke-width="0.6"/>
<rect x="726.3" y="60.2" width="9.6" height="9.4" rx="1.5" fill="#c8d6fa" stroke="rgba(0,0,0,0.12)" stroke-width="0.6"/>
<rect x="737.3" y="60.2" width="9.6" height="9.4" rx="1.5" fill="#78a4f0" stroke="rgba(0,0,0,0.12)" stroke-width="0.6"/>
<rect x="748.3" y="60.2" width="9.6" height="9.4" rx="1.5" fill="#5cb8f2" stroke="rgba(0,0,0,0.12)" stroke-width="0.6"/>
<rect x="759.3" y="60.2" width="9.6" height="9.4" rx="1.5" fill="#1414e0" stroke="rgba(0,0,0,0.12)" stroke-width="0.6"/>
<rect x="770.3" y="60.2" width="9.6" height="9.4" rx="1.5" fill="#3a3ad8" stroke="rgba(0,0,0,0.12)" stroke-width="0.6"/>
<rect x="781.3" y="60.2" width="9.6" height="9.4" rx="1.5" fill="#0c1aa0" stroke="rgba(0,0,0,0.12)" stroke-width="0.6"/>
<rect x="792.3" y="60.2" width="9.6" height="9.4" rx="1.5" fill="#7a20d8" stroke="rgba(0,0,0,0.12)" stroke-width="0.6"/>
<rect x="803.3" y="60.2" width="9.6" height="9.4" rx="1.5" fill="#f48cc8" stroke="rgba(0,0,0,0.12)" stroke-width="0.6"/>
<rect x="660.3" y="71.2" width="9.6" height="9.2" rx="1.5" fill="#e47c7c" stroke="rgba(0,0,0,0.12)" stroke-width="0.6"/>
<rect x="671.3" y="71.2" width="9.6" height="9.2" rx="1.5" fill="#f01414" stroke="rgba(0,0,0,0.12)" stroke-width="0.6"/>
<rect x="682.3" y="71.2" width="9.6" height="9.2" rx="1.5" fill="#e44040" stroke="rgba(0,0,0,0.12)" stroke-width="0.6"/>
<rect x="693.3" y="71.2" width="9.6" height="9.2" rx="1.5" fill="#8a4a1a" stroke="rgba(0,0,0,0.12)" stroke-width="0.6"/>
<rect x="704.3" y="71.2" width="9.6" height="9.2" rx="1.5" fill="#f68a4a" stroke="rgba(0,0,0,0.12)" stroke-width="0.6"/>
<rect x="715.3" y="71.2" width="9.6" height="9.2" rx="1.5" fill="#f8a494" stroke="rgba(0,0,0,0.12)" stroke-width="0.6"/>
<rect x="726.3" y="71.2" width="9.6" height="9.2" rx="1.5" fill="#f8b444" stroke="rgba(0,0,0,0.12)" stroke-width="0.6"/>
<rect x="737.3" y="71.2" width="9.6" height="9.2" rx="1.5" fill="#f6f014" stroke="rgba(0,0,0,0.12)" stroke-width="0.6"/>
<rect x="748.3" y="71.2" width="9.6" height="9.2" rx="1.5" fill="#62eec2" stroke="rgba(0,0,0,0.12)" stroke-width="0.6"/>
<rect x="759.3" y="71.2" width="9.6" height="9.2" rx="1.5" fill="#7eee7e" stroke="rgba(0,0,0,0.12)" stroke-width="0.6"/>
<rect x="770.3" y="71.2" width="9.6" height="9.2" rx="1.5" fill="#14e014" stroke="rgba(0,0,0,0.12)" stroke-width="0.6"/>
<rect x="781.3" y="71.2" width="9.6" height="9.2" rx="1.5" fill="#50c050" stroke="rgba(0,0,0,0.12)" stroke-width="0.6"/>
<rect x="792.3" y="71.2" width="9.6" height="9.2" rx="1.5" fill="#32a032" stroke="rgba(0,0,0,0.12)" stroke-width="0.6"/>
<rect x="803.3" y="71.2" width="9.6" height="9.2" rx="1.5" fill="#148014" stroke="rgba(0,0,0,0.12)" stroke-width="0.6"/>
<rect x="713.5" y="58.2" width="13.4" height="13.4" rx="2" fill="#000" stroke="#222"/>
<rect x="715" y="59.5" width="10" height="4" rx="1" fill="#555" opacity="0.6"/>
<rect x="894.5" y="60.5" width="75.5" height="20" rx="2" fill="#fff" stroke="#b8b8b8"/>
<text x="951.3" y="74.5" font-size="11" font-weight="400" fill="#111" text-anchor="end" textLength="34.5" lengthAdjust="spacingAndGlyphs" >100000</text>
<path d="M957 67 L960 63.5 L963 67 Z M957 74 L960 77.5 L963 74 Z" fill="#222"/>
<rect x="971.5" y="60.5" width="84.5" height="20" rx="2" fill="#fff" stroke="#b8b8b8"/>
<rect x="1039" y="62" width="15.5" height="17" fill="#f0f0f0"/>
<text x="975.5" y="74.5" font-size="11" font-weight="400" fill="#111" text-anchor="start" textLength="45" lengthAdjust="spacingAndGlyphs" >(x) unités</text>
<path d="M1042.5 68 h7 l-3.5 4 Z" fill="#111"/>
<rect x="1163.5" y="60.5" width="88" height="20" rx="2" fill="#fff" stroke="#b8b8b8"/>
<rect x="1233" y="62" width="16.5" height="17" fill="#f0f0f0"/>
<text x="1167.5" y="74.5" font-size="11" font-weight="400" fill="#111" text-anchor="start" textLength="50" lengthAdjust="spacingAndGlyphs" >1 seconde</text>
<path d="M1237.5 68 h7 l-3.5 4 Z" fill="#111"/>
<rect x="1358.5" y="56.5" width="49" height="27" rx="2.5" fill="#f6f6f6" stroke="#b8b8b8"/>
<rect x="1359.5" y="57.5" width="34" height="25" fill="#fdfdfd"/>
<path d="M1393.7 57 V83" stroke="#b8b8b8"/>
<path d="M1361 72 Q1366 64 1371 61.5 Q1374 60.5 1376 63 Q1379 70 1381 75 Q1382.5 77 1384 75 Q1388 68 1391 60.5" stroke="#a03030" stroke-width="1" fill="none"/><path d="M1361 72.5 Q1366 74 1370 70 Q1373 65 1376 64 Q1380 66 1383 71 Q1386 73 1391 69" stroke="#2a8a2a" stroke-width="1" fill="none"/><path d="M1364.5 59.2 h3 v3 h3 v3 h-3 v3 h-3 v-3 h-3 v-3 h3 z" fill="#fff" stroke="#607080" stroke-width="0.9"/><path d="M1372.5 69 l-2.5 3 h1.5 v2.5 h2 v-2.5 h1.5 z" fill="#20a020"/><path d="M1382.3 61 v3 h-1.5 l2.5 3 l2.5 -3 h-1.5 v-3 z" fill="#d03030"/><rect x="1362" y="76" width="3.4" height="4.2" fill="#18b018"/><rect x="1367" y="78.2" width="3.4" height="2" fill="#c03040"/><rect x="1372" y="77" width="3.4" height="3.2" fill="#18b018"/><rect x="1377" y="78.2" width="3.4" height="2" fill="#18b018"/><rect x="1382" y="78.2" width="3.4" height="2" fill="#c03040"/><rect x="1387" y="75.2" width="3.6" height="5" fill="#18b018"/><rect x="1361" y="80.2" width="30" height="1.2" fill="#2a3a8a"/>
<path d="M1397.2 69.2 h6.6 l-3.3 3.8 Z" fill="#111"/>
<path d="M1500 47 Q1493.5 52 1493.5 60 V84 Q1493.5 90 1500 93" fill="none" stroke="#b8b8b8" stroke-width="1"/>
<rect x="1494" y="46" width="421" height="48" fill="#fafafa" opacity="0.0"/>
<path d="M1496 68 L1500.5 71.3 L1496 74.5 Z" fill="#111"/>
<rect x="1505.5" y="60.5" width="18" height="18" rx="2.5" fill="#f4f4f4" stroke="#b4b4b4"/>
<g transform="translate(1507.6,62.5) scale(1.1)"><path d="M0.9 10.9 L5.3 6.5 A3.9 3.9 0 0 1 8.6 0.3 L8.6 2.9 L10.1 4.4 L12.7 4.4 A3.9 3.9 0 0 1 6.6 7.9 L2.3 12.3 Z" fill="#fff" stroke="#111" stroke-width="1.15" stroke-linejoin="round"/></g>
<text x="1549.6" y="57.4" font-size="11" font-weight="400" fill="#111" text-anchor="middle" textLength="16.2" lengthAdjust="spacingAndGlyphs" >Qté</text>
<rect x="1527.5" y="61.5" width="45" height="21" rx="3" fill="#fff" stroke="#c4c4c4"/>
<text x="1567.3" y="75.7" font-size="11" font-weight="400" fill="#111" text-anchor="end" >1</text>
<rect x="1578" y="54.5" width="1" height="31" fill="#d0d0d0"/>
<rect x="1643.7" y="54.5" width="1" height="31" fill="#d0d0d0"/>
<rect x="1709.5" y="54.5" width="1" height="31" fill="#d0d0d0"/>
<rect x="1845.5" y="54.5" width="1" height="31" fill="#d0d0d0"/>
<text x="1611.6" y="57.4" font-size="11" font-weight="400" fill="#111" text-anchor="middle" textLength="26.4" lengthAdjust="spacingAndGlyphs" >Limite</text>
<text x="1677.3" y="57.4" font-size="11" font-weight="400" fill="#111" text-anchor="middle" textLength="21.2" lengthAdjust="spacingAndGlyphs" >Stop</text>
<rect x="1581.5" y="62.5" width="27" height="26.5" rx="3" fill="#ececec" stroke="#bdbdbd"/><path d="M1584.5 65.5 h8 l3 3 v14 h-11 z" fill="#fff" stroke="#888" stroke-width="0.8"/><rect x="1592" y="75" width="11.5" height="11" fill="#fff" stroke="#6a6a6a" stroke-width="1"/><rect x="1592" y="79.8" width="11.5" height="1.5" fill="#6a6a6a"/><path d="M1586.5 65 v3.5 h-2 l3.5 4 l3.5 -4 h-2 v-3.5 z" fill="#e02a2a"/><path d="M1588 74 l-3.5 4 h2 v4.5 h3 v-4.5 h2 z" fill="#1aa01a"/>
<rect x="1612.5" y="62.5" width="27" height="26.5" rx="3" fill="#ececec" stroke="#bdbdbd"/><path d="M1615.5 65.5 h8 l3 3 v14 h-11 z" fill="#fff" stroke="#888" stroke-width="0.8"/><rect x="1623" y="75" width="11.5" height="11" fill="#fff" stroke="#6a6a6a" stroke-width="1"/><path d="M1624 85.5 L1634 76" stroke="#6a6a6a" stroke-width="1"/><path d="M1617.5 65 v3.5 h-2 l3.5 4 l3.5 -4 h-2 v-3.5 z" fill="#e02a2a"/><path d="M1619 74 l-3.5 4 h2 v4.5 h3 v-4.5 h2 z" fill="#1aa01a"/>
<rect x="1647.5" y="62.5" width="27" height="26.5" rx="3" fill="#ececec" stroke="#bdbdbd"/><path d="M1650.5 65.5 h8 l3 3 v14 h-11 z" fill="#fff" stroke="#888" stroke-width="0.8"/><rect x="1658" y="75" width="11.5" height="11" fill="#fff" stroke="#6a6a6a" stroke-width="1"/><rect x="1658" y="79.8" width="11.5" height="1.5" fill="#6a6a6a"/><path d="M1654 64.5 l-3.5 4 h2 v4 h3 v-4 h2 z" fill="#1aa01a"/><path d="M1652.5 75 v3.5 h-2 l3.5 4 l3.5 -4 h-2 v-3.5 z" fill="#e02a2a"/>
<rect x="1678.5" y="62.5" width="27" height="26.5" rx="3" fill="#ececec" stroke="#bdbdbd"/><path d="M1681.5 65.5 h8 l3 3 v14 h-11 z" fill="#fff" stroke="#888" stroke-width="0.8"/><rect x="1689" y="75" width="11.5" height="11" fill="#fff" stroke="#6a6a6a" stroke-width="1"/><path d="M1690 85.5 L1700 76" stroke="#6a6a6a" stroke-width="1"/><path d="M1685 64.5 l-3.5 4 h2 v4 h3 v-4 h2 z" fill="#1aa01a"/><path d="M1683.5 75 v3.5 h-2 l3.5 4 l3.5 -4 h-2 v-3.5 z" fill="#e02a2a"/>
<text x="1745.2" y="57.5" font-size="11" font-weight="400" fill="#111" text-anchor="middle" textLength="35.3" lengthAdjust="spacingAndGlyphs" >Vendre</text>
<text x="1811.6" y="57.5" font-size="11" font-weight="400" fill="#111" text-anchor="middle" textLength="38" lengthAdjust="spacingAndGlyphs" >Acheter</text>
<rect x="1713.5" y="62" width="62.5" height="27.5" rx="3" fill="#e44646"/>
<rect x="1779" y="62" width="63" height="27.5" rx="3" fill="#2daa2d"/>
<text x="1716" y="83.5" font-size="13" font-weight="400" fill="#fff" text-anchor="start" textLength="20.7" lengthAdjust="spacingAndGlyphs" >23 6</text>
<text x="1737.8" y="83.5" font-size="23" font-weight="400" fill="#fff" text-anchor="start" textLength="28.1" lengthAdjust="spacingAndGlyphs" >72,</text>
<text x="1767.6" y="75.5" font-size="10" font-weight="400" fill="#fff" text-anchor="start" >8</text>
<text x="1782" y="83.5" font-size="13" font-weight="400" fill="#f4fbe8" text-anchor="start" textLength="21.5" lengthAdjust="spacingAndGlyphs" >23 6</text>
<text x="1803.7" y="83.5" font-size="23" font-weight="400" fill="#f4fbe8" text-anchor="start" textLength="29.3" lengthAdjust="spacingAndGlyphs" >75,</text>
<text x="1833.5" y="75.5" font-size="10" font-weight="400" fill="#f4fbe8" text-anchor="start" >2</text>
<rect x="1851.5" y="54.5" width="11" height="11" fill="#fff" stroke="#a8a8a8"/>
<rect x="1851.5" y="77.5" width="11" height="11" fill="#fff" stroke="#a8a8a8"/>
<text x="1867.3" y="62.3" font-size="11" font-weight="400" fill="#111" text-anchor="start" >S</text>
<text x="1867.3" y="85.8" font-size="11" font-weight="400" fill="#111" text-anchor="start" >L</text>
<rect x="1878.5" y="48.5" width="17" height="20.5" rx="2.5" fill="#fff" stroke="#c8c8c8"/>
<rect x="1878.5" y="71.5" width="17" height="20.5" rx="2.5" fill="#fff" stroke="#c8c8c8"/>
<text x="1887" y="62.3" font-size="11" font-weight="400" fill="#b0b0b0" text-anchor="middle" >10</text>
<text x="1887" y="85.8" font-size="11" font-weight="400" fill="#b0b0b0" text-anchor="middle" >10</text>
<text x="1898.8" y="62.3" font-size="11" font-weight="400" fill="#111" text-anchor="start" textLength="13.8" lengthAdjust="spacingAndGlyphs" >pts</text>
<text x="1898.8" y="85.8" font-size="11" font-weight="400" fill="#111" text-anchor="start" textLength="13.8" lengthAdjust="spacingAndGlyphs" >pts</text>
<rect x="5" y="96" width="241" height="16.5" fill="url(#gHdr)" stroke="none"/>
<path d="M246.5 96 V112.5 H5" fill="none" stroke="#b8b8b8" stroke-width="1"/>
<text x="8.4" y="107.7" font-size="11" font-weight="400" fill="#111" text-anchor="start" textLength="182.8" lengthAdjust="spacingAndGlyphs" >Courbe gains&amp;pertes: MonSystème(8)</text>
<g transform="translate(196.3,97) scale(1.0)"><path d="M0.9 10.9 L5.3 6.5 A3.9 3.9 0 0 1 8.6 0.3 L8.6 2.9 L10.1 4.4 L12.7 4.4 A3.9 3.9 0 0 1 6.6 7.9 L2.3 12.3 Z" fill="#fff" stroke="#111" stroke-width="1.1" stroke-linejoin="round"/></g>
<g transform="translate(213.3,97.3)"><rect x="0.7" y="0.7" width="11.2" height="11.6" rx="1.2" fill="#fff" stroke="#111" stroke-width="1.4"/><rect x="0.5" y="0.5" width="11.6" height="2.8" fill="#111"/><rect x="0.5" y="0.5" width="4" height="2.8" fill="#777"/></g>
<circle cx="236.5" cy="103.6" r="6.3" fill="#3a3a3a"/><circle cx="236.5" cy="102.6" r="5" fill="#4a4a4a" opacity="0.5"/><path d="M233.9 101.0 L239.1 106.19999999999999 M239.1 101.0 L233.9 106.19999999999999" stroke="#fff" stroke-width="2.1"/>
<rect x="5" y="261" width="233.5" height="16.5" fill="url(#gHdr)" stroke="none"/>
<path d="M239.0 261 V277.5 H5" fill="none" stroke="#b8b8b8" stroke-width="1"/>
<text x="8.4" y="272.7" font-size="11" font-weight="400" fill="#111" text-anchor="start" textLength="192.5" lengthAdjust="spacingAndGlyphs" >ProBacktest - Positions: MonSystème(8)</text>
<g transform="translate(205,262.3)"><rect x="0.7" y="0.7" width="11.2" height="11.6" rx="1.2" fill="#fff" stroke="#111" stroke-width="1.4"/><rect x="0.5" y="0.5" width="11.6" height="2.8" fill="#111"/><rect x="0.5" y="0.5" width="4" height="2.8" fill="#777"/></g>
<circle cx="228.7" cy="268.6" r="6.3" fill="#3a3a3a"/><circle cx="228.7" cy="267.6" r="5" fill="#4a4a4a" opacity="0.5"/><path d="M226.1 266.0 L231.29999999999998 271.20000000000005 M231.29999999999998 266.0 L226.1 271.20000000000005" stroke="#fff" stroke-width="2.1"/>
<rect x="5" y="367" width="335.5" height="16.5" fill="url(#gHdr)" stroke="none"/>
<path d="M341.0 367 V383.5 H5" fill="none" stroke="#b8b8b8" stroke-width="1"/>
<text x="8.4" y="378.7" font-size="11" font-weight="400" fill="#111" text-anchor="start" textLength="277.5" lengthAdjust="spacingAndGlyphs" >Courbe gains&amp;pertes: CANDLE PULLBACK PIVOT 2 HALE</text>
<g transform="translate(290.3,368) scale(1.0)"><path d="M0.9 10.9 L5.3 6.5 A3.9 3.9 0 0 1 8.6 0.3 L8.6 2.9 L10.1 4.4 L12.7 4.4 A3.9 3.9 0 0 1 6.6 7.9 L2.3 12.3 Z" fill="#fff" stroke="#111" stroke-width="1.1" stroke-linejoin="round"/></g>
<g transform="translate(307,368.3)"><rect x="0.7" y="0.7" width="11.2" height="11.6" rx="1.2" fill="#fff" stroke="#111" stroke-width="1.4"/><rect x="0.5" y="0.5" width="11.6" height="2.8" fill="#111"/><rect x="0.5" y="0.5" width="4" height="2.8" fill="#777"/></g>
<circle cx="330.5" cy="374.6" r="6.3" fill="#3a3a3a"/><circle cx="330.5" cy="373.6" r="5" fill="#4a4a4a" opacity="0.5"/><path d="M327.9 372.0 L333.1 377.20000000000005 M333.1 372.0 L327.9 377.20000000000005" stroke="#fff" stroke-width="2.1"/>
<rect x="5" y="568" width="327.5" height="16.5" fill="url(#gHdr)" stroke="none"/>
<path d="M333.0 568 V584.5 H5" fill="none" stroke="#b8b8b8" stroke-width="1"/>
<text x="8.4" y="579.7" font-size="11" font-weight="400" fill="#111" text-anchor="start" textLength="286.3" lengthAdjust="spacingAndGlyphs" >ProBacktest - Positions: CANDLE PULLBACK PIVOT 2 HALE</text>
<g transform="translate(299,569.3)"><rect x="0.7" y="0.7" width="11.2" height="11.6" rx="1.2" fill="#fff" stroke="#111" stroke-width="1.4"/><rect x="0.5" y="0.5" width="11.6" height="2.8" fill="#111"/><rect x="0.5" y="0.5" width="4" height="2.8" fill="#777"/></g>
<circle cx="322.5" cy="575.6" r="6.3" fill="#3a3a3a"/><circle cx="322.5" cy="574.6" r="5" fill="#4a4a4a" opacity="0.5"/><path d="M319.9 573.0 L325.1 578.2 M325.1 573.0 L319.9 578.2" stroke="#fff" stroke-width="2.1"/>
<rect x="5" y="697" width="300.5" height="16.5" fill="url(#gHdr)" stroke="none"/>
<path d="M306.0 697 V713.5 H5" fill="none" stroke="#b8b8b8" stroke-width="1"/>
<text x="8.4" y="708.7" font-size="11" font-weight="400" fill="#111" text-anchor="start" textLength="259.8" lengthAdjust="spacingAndGlyphs" >ProBacktest - Variables: CANDLE PULLBACK PIVOT 2</text>
<g transform="translate(272.3,698.3)"><rect x="0.7" y="0.7" width="11.2" height="11.6" rx="1.2" fill="#fff" stroke="#111" stroke-width="1.4"/><rect x="0.5" y="0.5" width="11.6" height="2.8" fill="#111"/><rect x="0.5" y="0.5" width="4" height="2.8" fill="#777"/></g>
<circle cx="295.5" cy="704.6" r="6.3" fill="#3a3a3a"/><circle cx="295.5" cy="703.6" r="5" fill="#4a4a4a" opacity="0.5"/><path d="M292.9 702.0 L298.1 707.2 M298.1 702.0 L292.9 707.2" stroke="#fff" stroke-width="2.1"/>
<rect x="5" y="826" width="109.5" height="16.5" fill="url(#gHdr)" stroke="none"/>
<path d="M115.0 826 V842.5 H5" fill="none" stroke="#b8b8b8" stroke-width="1"/>
<text x="8.4" y="837.7" font-size="11" font-weight="400" fill="#111" text-anchor="start" textLength="17.8" lengthAdjust="spacingAndGlyphs" >Prix</text>
<g transform="translate(30.2,827) scale(1.0)"><path d="M0.9 10.9 L5.3 6.5 A3.9 3.9 0 0 1 8.6 0.3 L8.6 2.9 L10.1 4.4 L12.7 4.4 A3.9 3.9 0 0 1 6.6 7.9 L2.3 12.3 Z" fill="#fff" stroke="#111" stroke-width="1.1" stroke-linejoin="round"/></g>
<g transform="translate(47.3,827.3)"><rect x="0.7" y="0.7" width="11.2" height="11.6" rx="1.2" fill="#fff" stroke="#111" stroke-width="1.4"/><rect x="0.5" y="0.5" width="11.6" height="2.8" fill="#111"/><rect x="0.5" y="0.5" width="4" height="2.8" fill="#777"/></g>
<circle cx="70.5" cy="833.6" r="6.3" fill="#3a3a3a"/><circle cx="70.5" cy="832.6" r="5" fill="#4a4a4a" opacity="0.5"/><path d="M67.9 831.0 L73.1 836.2 M73.1 831.0 L67.9 836.2" stroke="#fff" stroke-width="2.1"/>
<rect x="81.5" y="827.5" width="12" height="11" fill="#f4f4f4" stroke="#8aa0d0" stroke-width="0.8"/><path d="M86.3 829.5 v3.5 h-2.3 l3.5 4 l3.5 -4 h-2.3 v-3.5 z" fill="#e03030"/>
<rect x="98.5" y="827.5" width="12" height="11" fill="#f4f4f4" stroke="#8ac08a" stroke-width="0.8"/><path d="M104.5 829 l-3.5 4 h2.3 v3.5 h2.4 v-3.5 h2.3 z" fill="#20a020"/>
<rect x="1866" y="111" width="3" height="1" fill="#a0a0a0"/>
<rect x="1866" y="144" width="3" height="1" fill="#a0a0a0"/>
<rect x="1866" y="178" width="3" height="1" fill="#a0a0a0"/>
<rect x="1866" y="211" width="3" height="1" fill="#a0a0a0"/>
<rect x="1866" y="244" width="3" height="1" fill="#a0a0a0"/>
<rect x="1866" y="128" width="4" height="1" fill="#a0a0a0"/>
<rect x="1866" y="161" width="4" height="1" fill="#a0a0a0"/>
<rect x="1866" y="195" width="4" height="1" fill="#a0a0a0"/>
<rect x="1866" y="228" width="4" height="1" fill="#a0a0a0"/>
<rect x="1866" y="104" width="4" height="1" fill="#a0a0a0"/>
<text x="1872.8" y="132.9" font-size="11" font-weight="400" fill="#111" text-anchor="start" textLength="31.7" lengthAdjust="spacingAndGlyphs" >16 000</text>
<text x="1872.8" y="165.9" font-size="11" font-weight="400" fill="#111" text-anchor="start" textLength="31.7" lengthAdjust="spacingAndGlyphs" >14 000</text>
<text x="1872.8" y="199.9" font-size="11" font-weight="400" fill="#111" text-anchor="start" textLength="31.7" lengthAdjust="spacingAndGlyphs" >12 000</text>
<text x="1872.8" y="232.9" font-size="12" font-weight="700" fill="#111" text-anchor="start" textLength="37.3" lengthAdjust="spacingAndGlyphs" >10 000</text>
<rect x="1870.5" y="96.5" width="36.5" height="15" fill="#f0f6fa" stroke="#b8c0c8" stroke-width="1"/>
<text x="1872.2" y="108.3" font-size="11" font-weight="400" fill="#3aaae0" text-anchor="start" textLength="31.7" lengthAdjust="spacingAndGlyphs" >17 400</text>
<rect x="1866" y="266" width="4" height="1" fill="#a0a0a0"/>
<text x="1872.8" y="271.6" font-size="11" font-weight="400" fill="#111" text-anchor="start" >1</text>
<rect x="1866" y="312" width="4" height="1" fill="#a0a0a0"/>
<text x="1872.8" y="317.1" font-size="11" font-weight="400" fill="#111" text-anchor="start" >-1</text>
<rect x="1866" y="335" width="4" height="1" fill="#a0a0a0"/>
<text x="1872.8" y="340.20000000000005" font-size="11" font-weight="400" fill="#111" text-anchor="start" >-2</text>
<rect x="1866" y="288" width="4" height="1" fill="#a0a0a0"/>
<rect x="1870.5" y="281.5" width="9.5" height="15" fill="#eef4fa" stroke="#b8c0c8"/>
<text x="1872.2" y="293.2" font-size="11" font-weight="400" fill="#3aaae0" text-anchor="start" >0</text>
<rect x="1866" y="372" width="4" height="1" fill="#a0a0a0"/>
<text x="1872.8" y="377.6" font-size="11" font-weight="400" fill="#111" text-anchor="start" textLength="31.7" lengthAdjust="spacingAndGlyphs" >14 000</text>
<rect x="1866" y="410" width="4" height="1" fill="#a0a0a0"/>
<text x="1872.8" y="415.6" font-size="11" font-weight="400" fill="#111" text-anchor="start" textLength="31.7" lengthAdjust="spacingAndGlyphs" >13 000</text>
<rect x="1866" y="432" width="4" height="1" fill="#a0a0a0"/>
<text x="1872.8" y="437.1" font-size="11" font-weight="400" fill="#111" text-anchor="start" textLength="31.7" lengthAdjust="spacingAndGlyphs" >12 500</text>
<rect x="1866" y="453" width="4" height="1" fill="#a0a0a0"/>
<text x="1872.8" y="458.1" font-size="11" font-weight="400" fill="#111" text-anchor="start" textLength="31.7" lengthAdjust="spacingAndGlyphs" >12 000</text>
<rect x="1866" y="474" width="4" height="1" fill="#a0a0a0"/>
<text x="1872.8" y="479.6" font-size="11" font-weight="400" fill="#111" text-anchor="start" textLength="31.7" lengthAdjust="spacingAndGlyphs" >11 500</text>
<rect x="1866" y="496" width="4" height="1" fill="#a0a0a0"/>
<text x="1872.8" y="500.6" font-size="11" font-weight="400" fill="#111" text-anchor="start" textLength="31.7" lengthAdjust="spacingAndGlyphs" >11 000</text>
<rect x="1866" y="516" width="4" height="1" fill="#a0a0a0"/>
<text x="1872.8" y="521.6" font-size="11" font-weight="400" fill="#111" text-anchor="start" textLength="31.7" lengthAdjust="spacingAndGlyphs" >10 500</text>
<rect x="1866" y="390" width="4" height="1" fill="#a0a0a0"/>
<text x="1872.2" y="392" font-size="11" font-weight="400" fill="#111" text-anchor="start" textLength="31.7" lengthAdjust="spacingAndGlyphs" >13 500</text>
<rect x="1866" y="538" width="4" height="1" fill="#a0a0a0"/>
<text x="1872.8" y="542.9" font-size="12" font-weight="700" fill="#111" text-anchor="start" textLength="37.3" lengthAdjust="spacingAndGlyphs" >10 000</text>
<rect x="1870.5" y="388.5" width="35.5" height="14" fill="#eef2fa" stroke="#b8c0c8"/>
<text x="1872.2" y="399.7" font-size="11" font-weight="400" fill="#6a90e0" text-anchor="start" textLength="31.7" lengthAdjust="spacingAndGlyphs" >13 365</text>
<rect x="1866" y="574" width="4" height="1" fill="#a0a0a0"/>
<text x="1872.8" y="578.6" font-size="11" font-weight="400" fill="#111" text-anchor="start" >1</text>
<rect x="1866" y="631" width="4" height="1" fill="#a0a0a0"/>
<text x="1872.8" y="636.2" font-size="11" font-weight="400" fill="#111" text-anchor="start" >-1</text>
<rect x="1866" y="659" width="4" height="1" fill="#a0a0a0"/>
<text x="1872.8" y="663.9" font-size="11" font-weight="400" fill="#111" text-anchor="start" >-2</text>
<rect x="1866" y="602" width="4" height="1" fill="#a0a0a0"/>
<rect x="1870.5" y="594.5" width="9.5" height="15" fill="#eef4fa" stroke="#b8c0c8"/>
<text x="1872.2" y="606.2" font-size="11" font-weight="400" fill="#6a90e0" text-anchor="start" >0</text>
<rect x="1866" y="731" width="4" height="1" fill="#a0a0a0"/>
<text x="1872.8" y="736.3000000000001" font-size="11" font-weight="400" fill="#111" text-anchor="start" >40</text>
<rect x="1866" y="760" width="4" height="1" fill="#a0a0a0"/>
<text x="1872.8" y="764.9" font-size="11" font-weight="400" fill="#111" text-anchor="start" >30</text>
<rect x="1866" y="788" width="4" height="1" fill="#a0a0a0"/>
<text x="1872.8" y="792.9" font-size="11" font-weight="400" fill="#111" text-anchor="start" >20</text>
<rect x="1866" y="703" width="4" height="1" fill="#a0a0a0"/>
<rect x="1870.5" y="697.5" width="15" height="14.5" fill="#f6f6f6" stroke="#b8b8b8"/>
<text x="1872.2" y="709.2" font-size="11" font-weight="400" fill="#111" text-anchor="start" >50</text>
<rect x="1866" y="863" width="4" height="1" fill="#a0a0a0"/>
<text x="1872.8" y="867.4" font-size="11" font-weight="400" fill="#111" text-anchor="start" textLength="31.7" lengthAdjust="spacingAndGlyphs" >23 600</text>
<rect x="1866" y="914" width="4" height="1" fill="#a0a0a0"/>
<text x="1872.8" y="918.1" font-size="11" font-weight="400" fill="#111" text-anchor="start" textLength="31.7" lengthAdjust="spacingAndGlyphs" >23 400</text>
<rect x="1866" y="940" width="4" height="1" fill="#a0a0a0"/>
<text x="1872.8" y="944.1" font-size="11" font-weight="400" fill="#111" text-anchor="start" textLength="31.7" lengthAdjust="spacingAndGlyphs" >23 300</text>
<rect x="1866" y="964" width="4" height="1" fill="#a0a0a0"/>
<text x="1872.8" y="969.1" font-size="11" font-weight="400" fill="#111" text-anchor="start" textLength="31.7" lengthAdjust="spacingAndGlyphs" >23 200</text>
<rect x="1866" y="990" width="4" height="1" fill="#a0a0a0"/>
<text x="1872.8" y="994.7" font-size="11" font-weight="400" fill="#111" text-anchor="start" textLength="31.7" lengthAdjust="spacingAndGlyphs" >23 100</text>
<rect x="1866" y="888" width="4" height="1" fill="#a0a0a0"/>
<text x="1872.8" y="891.9" font-size="12" font-weight="700" fill="#111" text-anchor="start" textLength="37.3" lengthAdjust="spacingAndGlyphs" >23 500</text>
<rect x="1870.5" y="828.5" width="45" height="14.5" fill="#fbfbfb" stroke="#b8b8b8"/>
<text x="1872.2" y="839.6" font-size="11" font-weight="400" fill="#f07a40" text-anchor="start" textLength="40.9" lengthAdjust="spacingAndGlyphs" >23 676,0</text>
<rect x="1870.5" y="843.5" width="45" height="14.8" fill="#f5c41a" stroke="#d8a810"/>
<text x="1872.2" y="854.5" font-size="11" font-weight="400" fill="#111" text-anchor="start" textLength="40.9" lengthAdjust="spacingAndGlyphs" >23 674,0</text>
<rect x="1866" y="843.3" width="5" height="1.6" fill="#111"/>
<path d="M218.9 938.9 L226.1 946.1 M226.1 938.9 L218.9 946.1" stroke="#b858b8" stroke-width="5" stroke-linecap="round"/><path d="M218.9 938.9 L226.1 946.1 M226.1 938.9 L218.9 946.1" stroke="#f090f2" stroke-width="3.3" stroke-linecap="round"/>
<path d="M217.5 958 L223.5 964 M223.5 958 L217.5 964" stroke="#c07830" stroke-width="5" stroke-linecap="round"/><path d="M217.5 958 L223.5 964 M223.5 958 L217.5 964" stroke="#f4a860" stroke-width="3.3" stroke-linecap="round"/>
<path d="M220.1 953.8 V960 H217.3 L222.5 965.8 L227.7 960 H224.9 V953.8 Z" fill="#f090f2" stroke="#b858b8" stroke-width="0.9"/>
<path d="M218.4 989.2 V983 H215.60000000000002 L220.8 977.2 L226.0 983 H223.20000000000002 V989.2 Z" fill="#22bdf0" stroke="#1a78b0" stroke-width="0.9"/>
<path d="M238.9 986.4 L246.1 993.6 M246.1 986.4 L238.9 993.6" stroke="#1a78b0" stroke-width="5" stroke-linecap="round"/><path d="M238.9 986.4 L246.1 993.6 M246.1 986.4 L238.9 993.6" stroke="#22bdf0" stroke-width="3.3" stroke-linecap="round"/>
<path d="M273.09999999999997 903.1 L280.3 910.3000000000001 M280.3 903.1 L273.09999999999997 910.3000000000001" stroke="#b858b8" stroke-width="5" stroke-linecap="round"/><path d="M273.09999999999997 903.1 L280.3 910.3000000000001 M280.3 903.1 L273.09999999999997 910.3000000000001" stroke="#f090f2" stroke-width="3.3" stroke-linecap="round"/>
<path d="M271.5 923 L277.5 929 M277.5 923 L271.5 929" stroke="#c07830" stroke-width="5" stroke-linecap="round"/><path d="M271.5 923 L277.5 929 M277.5 923 L271.5 929" stroke="#f4a860" stroke-width="3.3" stroke-linecap="round"/>
<path d="M274.3 918.8 V925 H271.5 L276.7 930.8 L281.9 925 H279.09999999999997 V918.8 Z" fill="#f090f2" stroke="#b858b8" stroke-width="0.9"/>
<path d="M274.5 924.5 L279.5 929.5 M279.5 924.5 L274.5 929.5" stroke="#b858b8" stroke-width="5" stroke-linecap="round"/><path d="M274.5 924.5 L279.5 929.5 M279.5 924.5 L274.5 929.5" stroke="#f090f2" stroke-width="3.3" stroke-linecap="round"/>
<path d="M273.40000000000003 957.9000000000001 V951.7 H270.6 L275.8 945.9000000000001 L281.0 951.7 H278.2 V957.9000000000001 Z" fill="#22bdf0" stroke="#1a78b0" stroke-width="0.9"/>
<path d="M273.09999999999997 965.4 L280.3 972.6 M280.3 965.4 L273.09999999999997 972.6" stroke="#1a78b0" stroke-width="5" stroke-linecap="round"/><path d="M273.09999999999997 965.4 L280.3 972.6 M280.3 965.4 L273.09999999999997 972.6" stroke="#22bdf0" stroke-width="3.3" stroke-linecap="round"/>
<path d="M591.6 869.9 L598.8000000000001 877.1 M598.8000000000001 869.9 L591.6 877.1" stroke="#b858b8" stroke-width="5" stroke-linecap="round"/><path d="M591.6 869.9 L598.8000000000001 877.1 M598.8000000000001 869.9 L591.6 877.1" stroke="#f090f2" stroke-width="3.3" stroke-linecap="round"/>
<path d="M590.5 889.4 L596.5 895.4 M596.5 889.4 L590.5 895.4" stroke="#c07830" stroke-width="5" stroke-linecap="round"/><path d="M590.5 889.4 L596.5 895.4 M596.5 889.4 L590.5 895.4" stroke="#f4a860" stroke-width="3.3" stroke-linecap="round"/>
<path d="M592.8000000000001 885.1999999999999 V891.4 H590.0 L595.2 897.1999999999999 L600.4000000000001 891.4 H597.6 V885.1999999999999 Z" fill="#f090f2" stroke="#b858b8" stroke-width="0.9"/>
<path d="M591.0 920.7 V914.5 H588.1999999999999 L593.4 908.7 L598.6 914.5 H595.8 V920.7 Z" fill="#22bdf0" stroke="#1a78b0" stroke-width="0.9"/>
<path d="M606.8 924.6999999999999 L614.0 931.9 M614.0 924.6999999999999 L606.8 931.9" stroke="#1a78b0" stroke-width="5" stroke-linecap="round"/><path d="M606.8 924.6999999999999 L614.0 931.9 M614.0 924.6999999999999 L606.8 931.9" stroke="#22bdf0" stroke-width="3.3" stroke-linecap="round"/>
<path d="M705.5 870 L711.5 876 M711.5 870 L705.5 876" stroke="#c07830" stroke-width="5" stroke-linecap="round"/><path d="M705.5 870 L711.5 876 M711.5 870 L705.5 876" stroke="#f4a860" stroke-width="3.3" stroke-linecap="round"/>
<path d="M707.0 867.4 L714.2 874.6 M714.2 867.4 L707.0 874.6" stroke="#b858b8" stroke-width="5" stroke-linecap="round"/><path d="M707.0 867.4 L714.2 874.6 M714.2 867.4 L707.0 874.6" stroke="#f090f2" stroke-width="3.3" stroke-linecap="round"/>
<path d="M716.8 862.4 L724.0 869.6 M724.0 862.4 L716.8 869.6" stroke="#b858b8" stroke-width="5" stroke-linecap="round"/><path d="M716.8 862.4 L724.0 869.6 M724.0 862.4 L716.8 869.6" stroke="#f090f2" stroke-width="3.3" stroke-linecap="round"/>
<path d="M706.5 887 L712.5 893 M712.5 887 L706.5 893" stroke="#c07830" stroke-width="5" stroke-linecap="round"/><path d="M706.5 887 L712.5 893 M712.5 887 L706.5 893" stroke="#f4a860" stroke-width="3.3" stroke-linecap="round"/>
<path d="M709.1 882.5 V888.7 H706.3 L711.5 894.5 L716.7 888.7 H713.9 V882.5 Z" fill="#f090f2" stroke="#b858b8" stroke-width="0.9"/>
<path d="M718.0 878.8 V885 H715.1999999999999 L720.4 890.8 L725.6 885 H722.8 V878.8 Z" fill="#f090f2" stroke="#b858b8" stroke-width="0.9"/>
<path d="M708.2 922.2 V916 H705.4 L710.6 910.2 L715.8000000000001 916 H713.0 V922.2 Z" fill="#22bdf0" stroke="#1a78b0" stroke-width="0.9"/>
<path d="M713.1999999999999 914.4 L720.4 921.6 M720.4 914.4 L713.1999999999999 921.6" stroke="#1a78b0" stroke-width="5" stroke-linecap="round"/><path d="M713.1999999999999 914.4 L720.4 921.6 M720.4 914.4 L713.1999999999999 921.6" stroke="#22bdf0" stroke-width="3.3" stroke-linecap="round"/>
<path d="M717.1 912.7 V906.5 H714.3 L719.5 900.7 L724.7 906.5 H721.9 V912.7 Z" fill="#22bdf0" stroke="#1a78b0" stroke-width="0.9"/>
<path d="M710 913 L716 919 M716 913 L710 919" stroke="#1a78b0" stroke-width="5" stroke-linecap="round"/><path d="M710 913 L716 919 M716 913 L710 919" stroke="#22bdf0" stroke-width="3.3" stroke-linecap="round"/>
<path d="M778.6999999999999 910.9 L785.9 918.1 M785.9 910.9 L778.6999999999999 918.1" stroke="#1a78b0" stroke-width="5" stroke-linecap="round"/><path d="M778.6999999999999 910.9 L785.9 918.1 M785.9 910.9 L778.6999999999999 918.1" stroke="#22bdf0" stroke-width="3.3" stroke-linecap="round"/>
<path d="M921.4 841.4 L928.6 848.6 M928.6 841.4 L921.4 848.6" stroke="#b858b8" stroke-width="5" stroke-linecap="round"/><path d="M921.4 841.4 L928.6 848.6 M928.6 841.4 L921.4 848.6" stroke="#f090f2" stroke-width="3.3" stroke-linecap="round"/>
<path d="M920.0 858 L926.0 864 M926.0 858 L920.0 864" stroke="#c07830" stroke-width="5" stroke-linecap="round"/><path d="M920.0 858 L926.0 864 M926.0 858 L920.0 864" stroke="#f4a860" stroke-width="3.3" stroke-linecap="round"/>
<path d="M923.5 853.8 V860 H920.6999999999999 L925.9 865.8 L931.1 860 H928.3 V853.8 Z" fill="#f090f2" stroke="#b858b8" stroke-width="0.9"/>
<path d="M920.6 877.2 V871 H917.8 L923 865.2 L928.2 871 H925.4 V877.2 Z" fill="#22bdf0" stroke="#1a78b0" stroke-width="0.9"/>
<path d="M921.6 892.2 V886 H918.8 L924 880.2 L929.2 886 H926.4 V892.2 Z" fill="#22bdf0" stroke="#1a78b0" stroke-width="0.9"/>
<path d="M925.8 891.4 L933.0 898.6 M933.0 891.4 L925.8 898.6" stroke="#1a78b0" stroke-width="5" stroke-linecap="round"/><path d="M925.8 891.4 L933.0 898.6 M933.0 891.4 L925.8 898.6" stroke="#22bdf0" stroke-width="3.3" stroke-linecap="round"/>
<path d="M920.4 902.9 L927.6 910.1 M927.6 902.9 L920.4 910.1" stroke="#1a78b0" stroke-width="5" stroke-linecap="round"/><path d="M920.4 902.9 L927.6 910.1 M927.6 902.9 L920.4 910.1" stroke="#22bdf0" stroke-width="3.3" stroke-linecap="round"/>
<path d="M1180.0 869.9 L1187.1999999999998 877.1 M1187.1999999999998 869.9 L1180.0 877.1" stroke="#b858b8" stroke-width="5" stroke-linecap="round"/><path d="M1180.0 869.9 L1187.1999999999998 877.1 M1187.1999999999998 869.9 L1180.0 877.1" stroke="#f090f2" stroke-width="3.3" stroke-linecap="round"/>
<path d="M1181.1999999999998 884.8 V891 H1178.3999999999999 L1183.6 896.8 L1188.8 891 H1186.0 V884.8 Z" fill="#f090f2" stroke="#b858b8" stroke-width="0.9"/>
<path d="M1180.3 920.7 V914.5 H1177.5 L1182.7 908.7 L1187.9 914.5 H1185.1000000000001 V920.7 Z" fill="#22bdf0" stroke="#1a78b0" stroke-width="0.9"/>
<path d="M1216.9 917.1999999999999 L1224.1 924.4 M1224.1 917.1999999999999 L1216.9 924.4" stroke="#2a5ab0" stroke-width="5" stroke-linecap="round"/><path d="M1216.9 917.1999999999999 L1224.1 924.4 M1224.1 917.1999999999999 L1216.9 924.4" stroke="#5a9af0" stroke-width="3.3" stroke-linecap="round"/>
<path d="M1219.4 917.1999999999999 L1226.6 924.4 M1226.6 917.1999999999999 L1219.4 924.4" stroke="#1a78b0" stroke-width="5" stroke-linecap="round"/><path d="M1219.4 917.1999999999999 L1226.6 924.4 M1226.6 917.1999999999999 L1219.4 924.4" stroke="#22bdf0" stroke-width="3.3" stroke-linecap="round"/>
<path d="M1358.7 891.4 L1365.8999999999999 898.6 M1365.8999999999999 891.4 L1358.7 898.6" stroke="#b858b8" stroke-width="5" stroke-linecap="round"/><path d="M1358.7 891.4 L1365.8999999999999 898.6 M1365.8999999999999 891.4 L1358.7 898.6" stroke="#f090f2" stroke-width="3.3" stroke-linecap="round"/>
<path d="M1359.8999999999999 922.5 V916.3 H1357.1 L1362.3 910.5 L1367.5 916.3 H1364.7 V922.5 Z" fill="#22bdf0" stroke="#1a78b0" stroke-width="0.9"/>
<path d="M1386.4 853.9 L1393.6 861.1 M1393.6 853.9 L1386.4 861.1" stroke="#b858b8" stroke-width="5" stroke-linecap="round"/><path d="M1386.4 853.9 L1393.6 861.1 M1393.6 853.9 L1386.4 861.1" stroke="#f090f2" stroke-width="3.3" stroke-linecap="round"/>
<path d="M1398.0 853.0 L1405.1999999999998 860.2 M1405.1999999999998 853.0 L1398.0 860.2" stroke="#b858b8" stroke-width="5" stroke-linecap="round"/><path d="M1398.0 853.0 L1405.1999999999998 860.2 M1405.1999999999998 853.0 L1398.0 860.2" stroke="#f090f2" stroke-width="3.3" stroke-linecap="round"/>
<path d="M1379.2 874.4 L1386.3999999999999 881.6 M1386.3999999999999 874.4 L1379.2 881.6" stroke="#b858b8" stroke-width="5" stroke-linecap="round"/><path d="M1379.2 874.4 L1386.3999999999999 881.6 M1386.3999999999999 874.4 L1379.2 881.6" stroke="#f090f2" stroke-width="3.3" stroke-linecap="round"/>
<path d="M1388.4 876.4 L1395.6 883.6 M1395.6 876.4 L1388.4 883.6" stroke="#b858b8" stroke-width="5" stroke-linecap="round"/><path d="M1388.4 876.4 L1395.6 883.6 M1395.6 876.4 L1388.4 883.6" stroke="#f090f2" stroke-width="3.3" stroke-linecap="round"/>
<path d="M1388.5 870.8 V877 H1385.7 L1390.9 882.8 L1396.1000000000001 877 H1393.3000000000002 V870.8 Z" fill="#f090f2" stroke="#b858b8" stroke-width="0.9"/>
<path d="M1399.1999999999998 869.0999999999999 V875.3 H1396.3999999999999 L1401.6 881.0999999999999 L1406.8 875.3 H1404.0 V869.0999999999999 Z" fill="#f090f2" stroke="#b858b8" stroke-width="0.9"/>
<path d="M1379.6 908.2 V902 H1376.8 L1382 896.2 L1387.2 902 H1384.4 V908.2 Z" fill="#5a9af0" stroke="#2a5ab0" stroke-width="0.9"/>
<path d="M1380.1 912.2 V906 H1377.3 L1382.5 900.2 L1387.7 906 H1384.9 V912.2 Z" fill="#22bdf0" stroke="#1a78b0" stroke-width="0.9"/>
<path d="M1388.5 903.8000000000001 V897.6 H1385.7 L1390.9 891.8000000000001 L1396.1000000000001 897.6 H1393.3000000000002 V903.8000000000001 Z" fill="#22bdf0" stroke="#1a78b0" stroke-width="0.9"/>
<path d="M1398.3 901.2 V895 H1395.5 L1400.7 889.2 L1405.9 895 H1403.1000000000001 V901.2 Z" fill="#22bdf0" stroke="#1a78b0" stroke-width="0.9"/>
<path d="M1386.4 912.6999999999999 L1393.6 919.9 M1393.6 912.6999999999999 L1386.4 919.9" stroke="#1a78b0" stroke-width="5" stroke-linecap="round"/><path d="M1386.4 912.6999999999999 L1393.6 919.9 M1393.6 912.6999999999999 L1386.4 919.9" stroke="#22bdf0" stroke-width="3.3" stroke-linecap="round"/>
<path d="M1413.1000000000001 906.4 L1420.3 913.6 M1420.3 906.4 L1413.1000000000001 913.6" stroke="#1a78b0" stroke-width="5" stroke-linecap="round"/><path d="M1413.1000000000001 906.4 L1420.3 913.6 M1420.3 906.4 L1413.1000000000001 913.6" stroke="#22bdf0" stroke-width="3.3" stroke-linecap="round"/>
<path d="M1453.6 848.5999999999999 V854.8 H1450.8 L1456 860.5999999999999 L1461.2 854.8 H1458.4 V848.5999999999999 Z" fill="#f090f2" stroke="#b858b8" stroke-width="0.9"/>
<path d="M1451.8 882.4000000000001 V876.2 H1449.0 L1454.2 870.4000000000001 L1459.4 876.2 H1456.6000000000001 V882.4000000000001 Z" fill="#22bdf0" stroke="#1a78b0" stroke-width="0.9"/>
<path d="M1455.9 876.4 L1463.1 883.6 M1463.1 876.4 L1455.9 883.6" stroke="#2a5ab0" stroke-width="5" stroke-linecap="round"/><path d="M1455.9 876.4 L1463.1 883.6 M1463.1 876.4 L1455.9 883.6" stroke="#5a9af0" stroke-width="3.3" stroke-linecap="round"/>
<path d="M1477.4 881.4 L1484.6 888.6 M1484.6 881.4 L1477.4 888.6" stroke="#1a78b0" stroke-width="5" stroke-linecap="round"/><path d="M1477.4 881.4 L1484.6 888.6 M1484.6 881.4 L1477.4 888.6" stroke="#22bdf0" stroke-width="3.3" stroke-linecap="round"/>
<path d="M1764.4 842.4 L1771.6 849.6 M1771.6 842.4 L1764.4 849.6" stroke="#b858b8" stroke-width="5" stroke-linecap="round"/><path d="M1764.4 842.4 L1771.6 849.6 M1771.6 842.4 L1764.4 849.6" stroke="#f090f2" stroke-width="3.3" stroke-linecap="round"/>
<path d="M1770.9 842.4 L1778.1 849.6 M1778.1 842.4 L1770.9 849.6" stroke="#b858b8" stroke-width="5" stroke-linecap="round"/><path d="M1770.9 842.4 L1778.1 849.6 M1778.1 842.4 L1770.9 849.6" stroke="#f090f2" stroke-width="3.3" stroke-linecap="round"/>
<path d="M1764.6 858.8 V865 H1761.8 L1767 870.8 L1772.2 865 H1769.4 V858.8 Z" fill="#f090f2" stroke="#b858b8" stroke-width="0.9"/>
<path d="M1772.1 858.8 V865 H1769.3 L1774.5 870.8 L1779.7 865 H1776.9 V858.8 Z" fill="#f090f2" stroke="#b858b8" stroke-width="0.9"/>
<path d="M1785.2 889.6999999999999 L1792.3999999999999 896.9 M1792.3999999999999 889.6999999999999 L1785.2 896.9" stroke="#208030" stroke-width="5" stroke-linecap="round"/><path d="M1785.2 889.6999999999999 L1792.3999999999999 896.9 M1792.3999999999999 889.6999999999999 L1785.2 896.9" stroke="#30c050" stroke-width="3.3" stroke-linecap="round"/>
<path d="M1780.8000000000002 889.6999999999999 L1788.0 896.9 M1788.0 889.6999999999999 L1780.8000000000002 896.9" stroke="#1a78b0" stroke-width="5" stroke-linecap="round"/><path d="M1780.8000000000002 889.6999999999999 L1788.0 896.9 M1788.0 889.6999999999999 L1780.8000000000002 896.9" stroke="#22bdf0" stroke-width="3.3" stroke-linecap="round"/>
<path d="M1763.3999999999999 902.8000000000001 V896.6 H1760.6 L1765.8 890.8000000000001 L1771.0 896.6 H1768.2 V902.8000000000001 Z" fill="#22bdf0" stroke="#1a78b0" stroke-width="0.9"/>
<path d="M1768.8000000000002 898.4 L1776.0 905.6 M1776.0 898.4 L1768.8000000000002 905.6" stroke="#2a5ab0" stroke-width="5" stroke-linecap="round"/><path d="M1768.8000000000002 898.4 L1776.0 905.6 M1776.0 898.4 L1768.8000000000002 905.6" stroke="#5a9af0" stroke-width="3.3" stroke-linecap="round"/>
<path d="M1763.4 883.1 L1770.6 890.3000000000001 M1770.6 883.1 L1763.4 890.3000000000001" stroke="#1a78b0" stroke-width="5" stroke-linecap="round"/><path d="M1763.4 883.1 L1770.6 890.3000000000001 M1770.6 883.1 L1763.4 890.3000000000001" stroke="#22bdf0" stroke-width="3.3" stroke-linecap="round"/>
<path d="M1770.0 888.5 V882.3 H1767.2 L1772.4 876.5 L1777.6000000000001 882.3 H1774.8000000000002 V888.5 Z" fill="#22bdf0" stroke="#1a78b0" stroke-width="0.9"/>
<path d="M1773.1000000000001 883.1 L1780.3 890.3000000000001 M1780.3 883.1 L1773.1000000000001 890.3000000000001" stroke="#2a5ab0" stroke-width="5" stroke-linecap="round"/><path d="M1773.1000000000001 883.1 L1780.3 890.3000000000001 M1780.3 883.1 L1773.1000000000001 890.3000000000001" stroke="#5a9af0" stroke-width="3.3" stroke-linecap="round"/>
<rect x="189.2" y="826" width="10.0" height="16.6" fill="#fde6c6"/>
<rect x="199.2" y="826" width="46.80000000000001" height="16.6" fill="#fbdcfb"/>
<rect x="246" y="826" width="64.80000000000001" height="16.6" fill="#fbdcfb"/>
<rect x="246" y="826" width="0.8" height="16.4" fill="#f4d4f4"/>
<text x="192.5" y="838" font-size="11" font-weight="400" fill="#111" text-anchor="start" >1</text>
<text x="201.7" y="838" font-size="11" font-weight="400" fill="#111" text-anchor="start" textLength="40.8" lengthAdjust="spacingAndGlyphs" >2 ordres</text>
<text x="248.3" y="838" font-size="11" font-weight="400" fill="#111" text-anchor="start" >1</text>
<text x="256.3" y="838" font-size="11" font-weight="400" fill="#111" text-anchor="start" textLength="40" lengthAdjust="spacingAndGlyphs" >2 ordres</text>
<text x="300.8" y="838" font-size="11" font-weight="400" fill="#111" text-anchor="start" >3</text>
<rect x="562" y="826" width="10" height="16.6" fill="#fde6c6"/>
<rect x="572" y="826" width="44" height="16.6" fill="#fbdcfb"/>
<rect x="616" y="826" width="12" height="16.6" fill="#fde6c6"/>
<text x="565.5" y="838" font-size="11" font-weight="400" fill="#111" text-anchor="start" >1</text>
<text x="575" y="838" font-size="11" font-weight="400" fill="#111" text-anchor="start" textLength="40" lengthAdjust="spacingAndGlyphs" >2 ordres</text>
<text x="618.7" y="838" font-size="11" font-weight="400" fill="#111" text-anchor="start" >3</text>
<rect x="687.5" y="826" width="47.5" height="16.6" fill="#fbdcfb"/>
<rect x="735" y="826" width="9.5" height="16.6" fill="#fbdcfb"/>
<rect x="735" y="826" width="0.8" height="16.4" fill="#f4d4f4"/>
<text x="691.2" y="838" font-size="11" font-weight="400" fill="#111" text-anchor="start" textLength="40" lengthAdjust="spacingAndGlyphs" >2 ordres</text>
<text x="735.5" y="838" font-size="11" font-weight="400" fill="#111" text-anchor="start" >s</text>
<rect x="893.7" y="826" width="9.299999999999955" height="16.6" fill="#fde6c6"/>
<rect x="903" y="826" width="44.299999999999955" height="16.6" fill="#fbdcfb"/>
<rect x="947.3" y="826" width="11.200000000000045" height="16.6" fill="#fde6c6"/>
<text x="896" y="838" font-size="11" font-weight="400" fill="#111" text-anchor="start" >1</text>
<text x="904" y="838" font-size="11" font-weight="400" fill="#111" text-anchor="start" textLength="40.6" lengthAdjust="spacingAndGlyphs" >2 ordres</text>
<text x="948.7" y="838" font-size="11" font-weight="400" fill="#111" text-anchor="start" >9</text>
<rect x="1160.2" y="826" width="48.5" height="16.6" fill="#fbdcfb"/>
<text x="1163.7" y="838" font-size="11" font-weight="400" fill="#111" text-anchor="start" textLength="40.8" lengthAdjust="spacingAndGlyphs" >2 ordres</text>
<rect x="1330" y="826" width="95.5" height="16.6" fill="#fbdcfb"/>
<rect x="1393" y="826" width="0.8" height="16.4" fill="#f4d4f4"/>
<text x="1333.7" y="838" font-size="11" font-weight="400" fill="#111" text-anchor="start" textLength="57.5" lengthAdjust="spacingAndGlyphs" >1@23 434,0</text>
<text x="1395" y="838" font-size="11" font-weight="400" fill="#111" text-anchor="start" textLength="17.5" lengthAdjust="spacingAndGlyphs" >I1,0</text>
<text x="1416.2" y="838" font-size="11" font-weight="400" fill="#111" text-anchor="start" >5</text>
<rect x="1433" y="826" width="47" height="16.6" fill="#fbdcfb"/>
<text x="1436.2" y="838" font-size="11" font-weight="400" fill="#111" text-anchor="start" textLength="40" lengthAdjust="spacingAndGlyphs" >2 ordres</text>
<rect x="1744.2" y="826" width="54.5" height="16.6" fill="#fbdcfb"/>
<rect x="1791.5" y="826" width="0.8" height="16.4" fill="#f4d4f4"/>
<text x="1747" y="838" font-size="11" font-weight="400" fill="#111" text-anchor="start" textLength="40.5" lengthAdjust="spacingAndGlyphs" >2 ordres</text>
<text x="1791" y="838" font-size="11" font-weight="400" fill="#111" text-anchor="start" >s</text>
</svg></body></html>
